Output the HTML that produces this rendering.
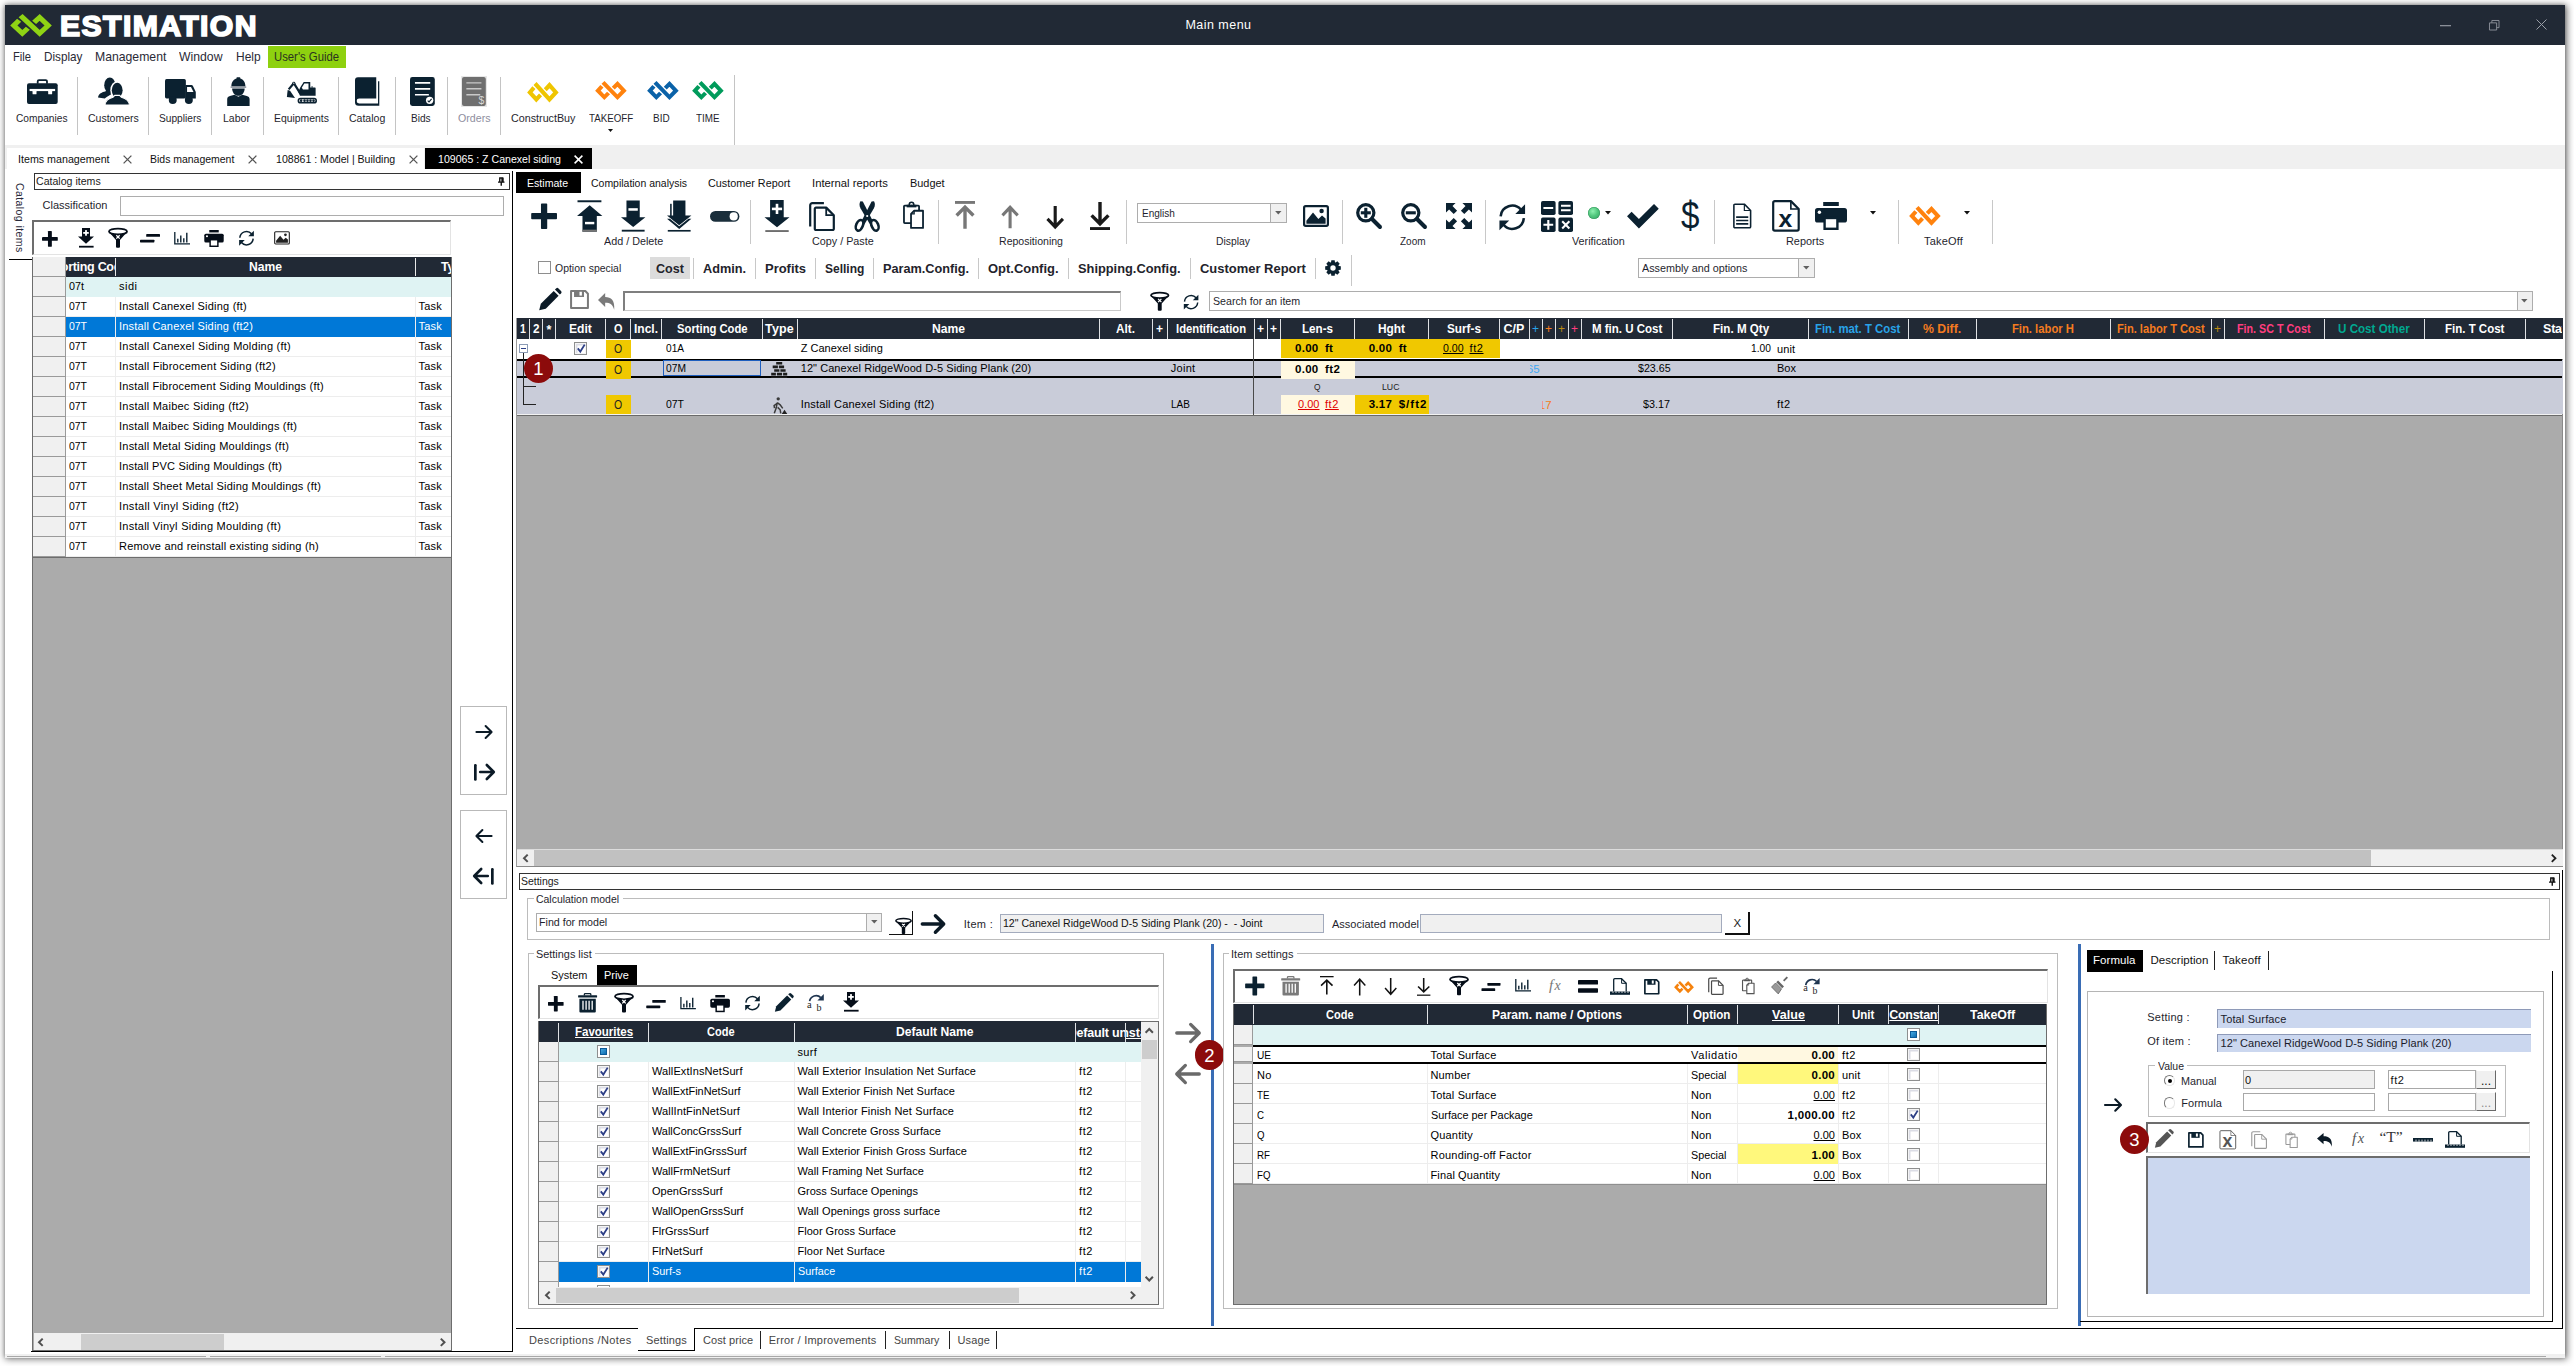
<!DOCTYPE html>
<html><head><meta charset="utf-8"><title>Main menu</title>
<style>
html,body{margin:0;padding:0;}
body{width:2574px;height:1366px;background:#fff;position:relative;overflow:hidden;font-family:"Liberation Sans",sans-serif;font-size:12px;}
div,span.t,svg{position:absolute;box-sizing:border-box;}
span.t{white-space:nowrap;display:block;}
svg{overflow:visible;}
</style></head><body>
<div style="left:5px;top:5px;width:2560px;height:1352px;background:#fff;box-shadow:1px 1px 7px 1px rgba(0,0,0,.55),0 0 3px rgba(0,0,0,.25);"></div>
<div style="left:5px;top:5px;width:2560px;height:39.5px;background:#212935;"></div>
<svg style="left:10.1px;top:14px;" width="42" height="22.6" viewBox="7.1 5.9 31.7 20" preserveAspectRatio="none"><path fill="none" stroke="#8fd314" stroke-width="4.1" stroke-linejoin="miter" d="M14 11.5L10 16.1l6.4 6.9 4.2-4.5M15.1 7.4l14.4 15.6 6.4-6.9-6.4-7.1-4.2 4.4"/></svg>
<span class="t" style="left:60px;top:6.56px;font-size:30.2px;line-height:38px;color:#fff;font-weight:bold;letter-spacing:1.4px;-webkit-text-stroke:1.700px #fff;">ESTIMATION</span>
<span class="t" style="left:1185.5px;top:16.65px;font-size:12.5px;line-height:16px;color:#fff;letter-spacing:0.46px;">Main menu</span>
<svg style="left:2440px;top:24.7px;" width="11" height="2" viewBox="0 0 11 2"><rect width="11" height="1.300" y="0" fill="#8a8f98"/></svg>
<svg style="left:2489px;top:20px;" width="10.5" height="10.5" viewBox="0 0 11 11"><path fill="none" stroke="#8a8f98" stroke-width="1" d="M.5 3h7.500v7.500H.5zM3 3V.5h7.500V8H8"/></svg>
<svg style="left:2536px;top:18.5px;" width="11" height="11" viewBox="0 0 11 11"><path fill="none" stroke="#9a9fa8" stroke-width="1" d="M.5 .5l10 10M10.500 .5l-10 10"/></svg>
<span class="t" style="left:13px;top:48.36px;font-size:13px;line-height:17px;color:#2a2a36;transform:scaleX(0.86);transform-origin:0 50%;">File</span>
<span class="t" style="left:44px;top:48.36px;font-size:13px;line-height:17px;color:#2a2a36;transform:scaleX(0.9);transform-origin:0 50%;">Display</span>
<span class="t" style="left:95px;top:48.36px;font-size:13px;line-height:17px;color:#2a2a36;transform:scaleX(0.94);transform-origin:0 50%;">Management</span>
<span class="t" style="left:179px;top:48.36px;font-size:13px;line-height:17px;color:#2a2a36;transform:scaleX(0.94);transform-origin:0 50%;">Window</span>
<span class="t" style="left:236px;top:48.36px;font-size:13px;line-height:17px;color:#2a2a36;transform:scaleX(0.92);transform-origin:0 50%;">Help</span>
<div style="left:267.5px;top:46px;width:78px;height:21.8px;background:#8ed10f;"></div>
<span class="t" style="left:274px;top:48.36px;font-size:13px;line-height:17px;color:#2a3320;transform:scaleX(0.87);transform-origin:0 50%;">User&#x27;s Guide</span>
<div style="left:77px;top:77px;width:1px;height:57.6px;background:#c4c4c4;"></div>
<div style="left:148px;top:77px;width:1px;height:57.6px;background:#c4c4c4;"></div>
<div style="left:211px;top:77px;width:1px;height:57.6px;background:#c4c4c4;"></div>
<div style="left:263px;top:77px;width:1px;height:57.6px;background:#c4c4c4;"></div>
<div style="left:338px;top:77px;width:1px;height:57.6px;background:#c4c4c4;"></div>
<div style="left:395px;top:77px;width:1px;height:57.6px;background:#c4c4c4;"></div>
<div style="left:447px;top:77px;width:1px;height:57.6px;background:#c4c4c4;"></div>
<div style="left:500px;top:77px;width:1px;height:57.6px;background:#c4c4c4;"></div>
<div style="left:734px;top:75px;width:1px;height:70px;background:#c4c4c4;"></div>
<span class="t" style="left:15.9px;top:110.93px;font-size:11.2px;line-height:15px;color:#1f1f2e;transform:scaleX(0.91);transform-origin:0 50%;">Companies</span>
<span class="t" style="left:87.8px;top:110.93px;font-size:11.2px;line-height:15px;color:#1f1f2e;transform:scaleX(0.94);transform-origin:0 50%;">Customers</span>
<span class="t" style="left:158.5px;top:110.93px;font-size:11.2px;line-height:15px;color:#1f1f2e;transform:scaleX(0.91);transform-origin:0 50%;">Suppliers</span>
<span class="t" style="left:223px;top:110.93px;font-size:11.2px;line-height:15px;color:#1f1f2e;transform:scaleX(0.94);transform-origin:0 50%;">Labor</span>
<span class="t" style="left:273.6px;top:110.93px;font-size:11.2px;line-height:15px;color:#1f1f2e;transform:scaleX(0.93);transform-origin:0 50%;">Equipments</span>
<span class="t" style="left:348.7px;top:110.93px;font-size:11.2px;line-height:15px;color:#1f1f2e;transform:scaleX(0.94);transform-origin:0 50%;">Catalog</span>
<span class="t" style="left:411px;top:110.93px;font-size:11.2px;line-height:15px;color:#1f1f2e;transform:scaleX(0.9);transform-origin:0 50%;">Bids</span>
<span class="t" style="left:457.8px;top:110.93px;font-size:11.2px;line-height:15px;color:#8e8e9e;transform:scaleX(0.95);transform-origin:0 50%;">Orders</span>
<span class="t" style="left:510.7px;top:110.93px;font-size:11.2px;line-height:15px;color:#1f1f2e;transform:scaleX(0.96);transform-origin:0 50%;">ConstructBuy</span>
<span class="t" style="left:589px;top:110.93px;font-size:11.2px;line-height:15px;color:#1f1f2e;transform:scaleX(0.87);transform-origin:0 50%;">TAKEOFF</span>
<span class="t" style="left:653px;top:110.93px;font-size:11.2px;line-height:15px;color:#1f1f2e;transform:scaleX(0.89);transform-origin:0 50%;">BID</span>
<span class="t" style="left:695.5px;top:110.93px;font-size:11.2px;line-height:15px;color:#1f1f2e;transform:scaleX(0.88);transform-origin:0 50%;">TIME</span>
<svg style="left:608px;top:128.9px;" width="5" height="3" viewBox="0 0 8 4.5"><path fill="#111" d="M0 0h8L4 4.5z"/></svg>
<svg style="left:27px;top:78.9px;" width="30.7" height="25.2" viewBox="0 0 31 25"><path fill="none" stroke="#0b2130" stroke-width="1.800" d="M10.800 4.500V2.200a1.300 1.300 0 0 1 1.300-1.300h6.800a1.300 1.300 0 0 1 1.300 1.300v2.300"/><rect x="0" y="4" width="31" height="21" rx="2" fill="#0b2130"/><rect x="2.600" y="9.800" width="25.800" height="2.200" fill="#fff"/><rect x="5.600" y="11.500" width="4" height="3.800" rx=".6" fill="#fff"/><rect x="21.400" y="11.500" width="4" height="3.800" rx=".6" fill="#fff"/></svg>
<svg style="left:98px;top:77px;" width="31" height="28" viewBox="0 0 31 28"><ellipse cx="11.800" cy="8.200" rx="5.600" ry="7.600" fill="#0b2130"/><path fill="#0b2130" d="M0 20.500c.6-4 4-5.300 7.600-6.300l3-1.400h4.600l.5 3-7 4.200-2 1.500z"/><ellipse cx="19.200" cy="13.200" rx="6.900" ry="9" fill="#fff"/><ellipse cx="19.200" cy="13.200" rx="5.400" ry="7.500" fill="#0b2130"/><path fill="#0b2130" stroke="#fff" stroke-width="1.100" d="M7 28c.4-5 3.600-6.600 8-7.800l1.800-1.800h4.800l1.800 1.800c4.400 1.200 7.600 2.800 8 7.800z"/></svg>
<svg style="left:164.6px;top:78.9px;" width="30.8" height="25" viewBox="0 0 31 25"><rect x="0" y="0" width="21" height="19.500" rx="1.600" fill="#0b2130"/><path fill="#0b2130" d="M20.500 6h6.200a1.500 1.500 0 0 1 1.300.8l2.800 5.600a2 2 0 0 1 .2.900v6.200h-10.500z"/><path fill="#fff" d="M22.200 8h4l2.500 5h-6.500z"/><circle cx="7.800" cy="21" r="4" fill="#0b2130"/><circle cx="24" cy="21" r="4" fill="#0b2130"/></svg>
<svg style="left:226.7px;top:76.6px;" width="22.8" height="29.3" viewBox="0 0 23 29"><path fill="#0b2130" d="M4.400 9.400C4.400 4 7.600 1.800 9.600 1.300V.6a.6.600 0 0 1 .6-.6h2.600a.6.600 0 0 1 .6.600v.7c2 .5 5.200 2.700 5.200 8.100z"/><rect x="3.600" y="9.200" width="15.800" height="1.500" fill="#8a929b"/><path fill="#0b2130" d="M5.200 11.200h12.600c0 4-2.600 7.400-6.300 7.400s-6.300-3.400-6.300-7.400z"/><path fill="#0b2130" d="M.2 29v-6.800c0-1.800 1.200-2.700 2.800-3.200l4.600-1.400 3.900 2 3.900-2 4.600 1.400c1.600.5 2.800 1.400 2.800 3.200V29z"/></svg>
<svg style="left:285.8px;top:80.6px;" width="31.3" height="22.8" viewBox="0 0 31 23"><path fill="#0b2130" d="M14.200 6.400L17.600 .9h6.600v5.700h1.400V5h.8v1.600H29a.6.600 0 0 1 .6.600v7.600H13.800l-1.700-4z"/><path fill="#fff" d="M15.600 6.800l2.600-4.300h4.200v6.100h-5.600z"/><path fill="none" stroke="#0b2130" stroke-width="2.200" stroke-linejoin="round" d="M2.400 8.400L7.600 2.200l6.600 10.600"/><path fill="#0b2130" d="M1.400 9.200l2.400.6 5 7.400-8.200-1z"/><circle cx="7.600" cy="2.200" r="1.500" fill="#0b2130"/><circle cx="7.600" cy="2.200" r=".6" fill="#fff"/><rect x="11.400" y="16.800" width="19.600" height="6" rx="3" fill="#0b2130"/><rect x="13" y="18.400" width="16.400" height="2.800" rx="1.400" fill="#fff"/><circle cx="15" cy="19.800" r="1.300" fill="#0b2130"/><circle cx="18.400" cy="19.800" r="1.300" fill="#0b2130"/><circle cx="21.400" cy="19.800" r="1.300" fill="#0b2130"/><circle cx="24.400" cy="19.800" r="1.300" fill="#0b2130"/><circle cx="27.500" cy="19.800" r="1.300" fill="#0b2130"/></svg>
<svg style="left:354.7px;top:76.9px;" width="24.6" height="29" viewBox="0 0 25 29"><path fill="#0b2130" d="M3 0h18.600v21.600H4.200a2 2 0 0 0 0 5h19.200V4.200h1.300V29H3.600A3.600 3.600 0 0 1 0 25.400V3a3 3 0 0 1 3-3z"/><path fill="#0b2130" d="M4.200 22.800h17.400v2.400H4.200a1.200 1.200 0 0 1 0-2.400z" opacity="0"/></svg>
<svg style="left:410px;top:76.9px;" width="24.8" height="29" viewBox="0 0 25 29"><rect x="0" y="0" width="25" height="29" rx="2.400" fill="#0b2130"/><path stroke="#fff" stroke-width="1.700" d="M5 5.800h15.400M5 11.800h15.400M5 17.800h14"/><circle cx="19.800" cy="23.400" r="3.700" fill="#fff"/><path fill="none" stroke="#0b2130" stroke-width="1.100" d="M17.800 23.600l1.400 1.400 2.600-3"/></svg>
<div style="left:461px;top:75.5px;width:26.4px;height:31.5px;background:#e6e6e6;"></div>
<svg style="left:462.4px;top:76.9px;" width="23.8" height="29" viewBox="0 0 24 29"><rect x="0" y="0" width="24" height="29" rx="2" fill="#6f6f6f"/><path stroke="#c9c9c9" stroke-width="1.500" d="M4.400 5.800h15.200M4.400 11.800h15.200M4.400 17.800h14"/><text x="22.600" y="27.600" text-anchor="end" font-family="Liberation Sans,sans-serif" font-size="10.500" fill="#d8d8d8">$</text></svg>
<svg style="left:527px;top:81.6px;" width="31.8" height="20.5" viewBox="7.1 5.9 31.7 20" preserveAspectRatio="none"><path fill="none" stroke="#efc500" stroke-width="4.1" stroke-linejoin="miter" d="M14 11.5L10 16.1l6.4 6.9 4.2-4.5M15.1 7.4l14.4 15.6 6.4-6.9-6.4-7.1-4.2 4.4"/></svg>
<svg style="left:595px;top:81.4px;" width="31.8" height="19" viewBox="7.1 5.9 31.7 20" preserveAspectRatio="none"><path fill="none" stroke="#ff820d" stroke-width="4.1" stroke-linejoin="miter" d="M14 11.5L10 16.1l6.4 6.9 4.2-4.5M15.1 7.4l14.4 15.6 6.4-6.9-6.4-7.1-4.2 4.4"/></svg>
<svg style="left:647px;top:81.4px;" width="31.8" height="19" viewBox="7.1 5.9 31.7 20" preserveAspectRatio="none"><path fill="none" stroke="#0a62a8" stroke-width="4.1" stroke-linejoin="miter" d="M14 11.5L10 16.1l6.4 6.9 4.2-4.5M15.1 7.4l14.4 15.6 6.4-6.9-6.4-7.1-4.2 4.4"/></svg>
<svg style="left:692px;top:81.4px;" width="31.8" height="19" viewBox="7.1 5.9 31.7 20" preserveAspectRatio="none"><path fill="none" stroke="#009b5b" stroke-width="4.1" stroke-linejoin="miter" d="M14 11.5L10 16.1l6.4 6.9 4.2-4.5M15.1 7.4l14.4 15.6 6.4-6.9-6.4-7.1-4.2 4.4"/></svg>
<div style="left:5px;top:144.5px;width:2560px;height:24.3px;background:#f0f0f0;"></div>
<div style="left:7px;top:147.5px;width:417px;height:21.3px;background:#fff;"></div>
<span class="t" style="left:17.5px;top:151.74px;font-size:11.5px;line-height:15px;color:#111;transform:scaleX(0.93);transform-origin:0 50%;">Items management</span>
<svg style="left:122.5px;top:154.7px;" width="9" height="9" viewBox="0 0 9 9"><path stroke="#555" stroke-width="1.300" d="M.6 .6l7.800 7.800M8.400 .6L.6 8.400"/></svg>
<span class="t" style="left:150px;top:151.74px;font-size:11.5px;line-height:15px;color:#111;transform:scaleX(0.91);transform-origin:0 50%;">Bids management</span>
<svg style="left:247.5px;top:154.7px;" width="9" height="9" viewBox="0 0 9 9"><path stroke="#555" stroke-width="1.300" d="M.6 .6l7.800 7.800M8.400 .6L.6 8.400"/></svg>
<span class="t" style="left:276px;top:151.74px;font-size:11.5px;line-height:15px;color:#111;transform:scaleX(0.92);transform-origin:0 50%;">108861 : Model | Building</span>
<svg style="left:408.5px;top:154.7px;" width="9" height="9" viewBox="0 0 9 9"><path stroke="#555" stroke-width="1.300" d="M.6 .6l7.800 7.800M8.400 .6L.6 8.400"/></svg>
<div style="left:425px;top:147.5px;width:167.3px;height:21.4px;background:#000;"></div>
<span class="t" style="left:437.6px;top:152.44px;font-size:11.5px;line-height:15px;color:#fff;transform:scaleX(0.92);transform-origin:0 50%;">109065 : Z Canexel siding</span>
<svg style="left:574px;top:155.1px;" width="9" height="9" viewBox="0 0 9 9"><path stroke="#fff" stroke-width="1.500" d="M.6 .6l7.800 7.800M8.400 .6L.6 8.400"/></svg>
<span class="t" style="left:26.300px;top:182.500px;font-size:10.500px;line-height:12px;color:#2a2a3a;transform:rotate(90deg);transform-origin:0 0;letter-spacing:0.42px;">Catalog items</span>
<div style="left:9px;top:259px;width:23.5px;height:1px;background:#000;"></div>
<div style="left:512px;top:171px;width:1px;height:1181px;background:#000;"></div>
<div style="left:31px;top:1351px;width:481px;height:1px;background:#000;"></div>
<div style="left:34px;top:173px;width:475.5px;height:16.6px;background:#fff;border:1px solid #333;"></div>
<span class="t" style="left:36px;top:174.04px;font-size:11.5px;line-height:15px;color:#222;transform:scaleX(0.92);transform-origin:0 50%;">Catalog items</span>
<svg style="left:497.5px;top:176.5px;" width="6.5" height="9" viewBox="0 0 7 9"><path fill="none" stroke="#111" stroke-width="1.500" d="M1.200 .8h4.600M1.900 .6v4.400M5.200 .6v4.400M0 5.200h7M3.500 5.200V9"/><rect x="3.600" y=".6" width="2.200" height="4.600" fill="#111"/></svg>
<span class="t" style="left:42.5px;top:198.43px;font-size:11px;line-height:14px;color:#1f1f2e;letter-spacing:0.01px;">Classification</span>
<div style="left:120px;top:196px;width:383.5px;height:20px;background:#fff;border:1px solid #adadad;"></div>
<div style="left:32px;top:220px;width:418.5px;height:34.5px;background:#fff;border-top:2px solid #6d6d6d;border-left:2px solid #6d6d6d;border-right:1px solid #e3e3e3;border-bottom:1px solid #e3e3e3;"></div>
<svg style="left:42px;top:230.5px;" width="15.8" height="15.8" viewBox="0 0 26 26"><rect x="9.8" y="0" width="6.4" height="26" rx=".8" fill="#050d18"/><rect x="0" y="9.8" width="26" height="6.4" rx=".8" fill="#050d18"/></svg>
<svg style="left:78px;top:228px;" width="16" height="20" viewBox="0 0 16 20"><path fill="#050d18" d="M4 0h8v8.4h4L8 15.8 0 8.4h4z"/><rect x="5.2" y="4" width="5.6" height="1.8" fill="#fff"/><rect x="7.1" y="2.1" width="1.8" height="5.6" fill="#fff"/><rect x="1" y="17.8" width="14.6" height="1.8" fill="#050d18"/></svg>
<svg style="left:108px;top:228px;" width="20" height="20" viewBox="0 0 20 20" preserveAspectRatio="none"><path fill="#050d18" d="M.6 3.600L8 12v6.800a1 1 0 0 0 1 1h2a1 1 0 0 0 1-1V12l7.400-8.400z"/><ellipse cx="10" cy="3.500" rx="9" ry="2.900" fill="#fff" stroke="#050d18" stroke-width="1.800"/><path stroke="#fff" stroke-width="1.300" d="M8.300 7.200l3.400 3.400M11.700 7.200l-3.400 3.400"/></svg>
<svg style="left:140px;top:234px;" width="20" height="8.7" viewBox="0 0 20 8.6"><rect x="6.200" y="0" width="13.800" height="2.800" rx=".6" fill="#050d18"/><rect x="0" y="5.600" width="14.400" height="2.800" rx=".6" fill="#050d18"/></svg>
<svg style="left:174px;top:231.5px;" width="16" height="13" viewBox="0 0 16 13"><path fill="none" stroke="#0b2130" stroke-width="1.3" d="M.8 0v11.900H16"/><path stroke="#0b2130" stroke-width="1.4" d="M3.800 10.600V6.800M6.800 10.600V3.600M9.800 10.600V6.200M12.800 10.600V.8"/></svg>
<svg style="left:204px;top:229.5px;" width="20" height="17" viewBox="0 0 32 28"><rect x="8.2" y="0" width="15.6" height="4" fill="#050d18"/><rect x="0" y="6" width="32" height="14.6" rx="2.6" fill="#050d18"/><circle cx="4.4" cy="10.2" r="1.7" fill="#fff"/><rect x="9.6" y="16" width="12.8" height="10.8" fill="#fff" stroke="#050d18" stroke-width="2.4"/></svg>
<svg style="left:237.5px;top:229.8px;" width="17" height="16.4" viewBox="0 0 26 28"><path fill="none" stroke="#0b2130" stroke-width="2.6" d="M1.6 13.2A11.4 11.4 0 0 1 21.6 6.6"/><path fill="#0b2130" d="M25.6 1.2v9.6H16z"/><path fill="none" stroke="#0b2130" stroke-width="2.6" d="M24.4 14.8A11.4 11.4 0 0 1 4.4 21.4"/><path fill="#0b2130" d="M.4 26.8v-9.6H10z"/></svg>
<svg style="left:274px;top:231px;" width="16" height="13.8" viewBox="0 0 26 22"><rect x="1.1" y="1.1" width="23.8" height="19.8" rx="1.6" fill="#fff" stroke="#222" stroke-width="1.8"/><path fill="#222" d="M3.4 18.800v-3L10 7.600l5.400 6.400 3.600-3.400 3.600 3v5.200z"/><circle cx="18.6" cy="6" r="2.2" fill="#222"/></svg>
<div style="left:32px;top:256.6px;width:420px;height:1094.4px;background:#ababab;border:1px solid #6d6d6d;"></div>
<div style="left:33px;top:257px;width:418px;height:19.7px;background:#212935;"></div>
<div style="left:33px;top:257px;width:33px;height:19.7px;background:#f0f0f0;border-right:1px solid #9a9a9a;border-bottom:1px solid #9a9a9a;"></div>
<div style="left:115px;top:257.5px;width:1px;height:18.5px;background:#e8e8e8;"></div>
<div style="left:415px;top:257.5px;width:1px;height:18.5px;background:#e8e8e8;"></div>
<div style="left:66px;top:257px;width:49px;height:19.5px;overflow:hidden;"><span class="t" style="left:-13.200px;top:2px;font-size:12.500px;line-height:16px;font-weight:bold;color:#fff;letter-spacing:-.3px;">Sorting Code</span></div>
<span class="t" style="left:249px;top:259.15px;font-size:12.5px;line-height:16px;color:#fff;font-weight:bold;transform:scaleX(0.97);transform-origin:0 50%;">Name</span>
<div style="left:416px;top:257px;width:35px;height:19.5px;overflow:hidden;"><span class="t" style="left:25px;top:2px;font-size:12.500px;line-height:16px;font-weight:bold;color:#fff;letter-spacing:-.3px;">Type</span></div>
<div style="left:66px;top:276.7px;width:385px;height:20px;background:#dff3f3;"></div>
<div style="left:33px;top:276.7px;width:33px;height:20px;background:#f0f0f0;border-right:1px solid #9a9a9a;border-bottom:1px solid #9a9a9a;"></div>
<span class="t" style="left:69.3px;top:279.03px;font-size:11px;line-height:14px;color:#000;transform:scaleX(0.98);transform-origin:0 50%;">07t</span>
<span class="t" style="left:119px;top:279.03px;font-size:11px;line-height:14px;color:#000;letter-spacing:0.5px;">sidi</span>
<div style="left:66px;top:296.7px;width:385px;height:20px;background:#fff;"></div>
<div style="left:33px;top:296.7px;width:33px;height:20px;background:#f0f0f0;border-right:1px solid #9a9a9a;border-bottom:1px solid #9a9a9a;"></div>
<div style="left:65.5px;top:316px;width:385.5px;height:1px;background:#ededed;"></div>
<div style="left:115px;top:296.7px;width:1px;height:20px;background:#ededed;"></div>
<div style="left:415px;top:296.7px;width:1px;height:20px;background:#ededed;"></div>
<span class="t" style="left:69.3px;top:299.03px;font-size:11px;line-height:14px;color:#000;transform:scaleX(0.95);transform-origin:0 50%;">07T</span>
<span class="t" style="left:119px;top:299.03px;font-size:11px;line-height:14px;color:#000;letter-spacing:0.21px;">Install Canexel Siding (ft)</span>
<span class="t" style="left:418.5px;top:299.03px;font-size:11px;line-height:14px;color:#000;letter-spacing:0.22px;">Task</span>
<div style="left:66px;top:316.7px;width:385px;height:20px;background:#0078d7;"></div>
<div style="left:33px;top:316.7px;width:33px;height:20px;background:#f0f0f0;border-right:1px solid #9a9a9a;border-bottom:1px solid #9a9a9a;"></div>
<div style="left:65.5px;top:336px;width:385.5px;height:1px;background:#0078d7;"></div>
<div style="left:115px;top:316.7px;width:1px;height:20px;background:#ededed;"></div>
<div style="left:415px;top:316.7px;width:1px;height:20px;background:#ededed;"></div>
<span class="t" style="left:69.3px;top:319.03px;font-size:11px;line-height:14px;color:#fff;transform:scaleX(0.95);transform-origin:0 50%;">07T</span>
<span class="t" style="left:119px;top:319.03px;font-size:11px;line-height:14px;color:#fff;letter-spacing:0.2px;">Install Canexel Siding (ft2)</span>
<span class="t" style="left:418.5px;top:319.03px;font-size:11px;line-height:14px;color:#fff;letter-spacing:0.22px;">Task</span>
<div style="left:66px;top:336.7px;width:385px;height:20px;background:#fff;"></div>
<div style="left:33px;top:336.7px;width:33px;height:20px;background:#f0f0f0;border-right:1px solid #9a9a9a;border-bottom:1px solid #9a9a9a;"></div>
<div style="left:65.5px;top:356px;width:385.5px;height:1px;background:#ededed;"></div>
<div style="left:115px;top:336.7px;width:1px;height:20px;background:#ededed;"></div>
<div style="left:415px;top:336.7px;width:1px;height:20px;background:#ededed;"></div>
<span class="t" style="left:69.3px;top:339.03px;font-size:11px;line-height:14px;color:#000;transform:scaleX(0.95);transform-origin:0 50%;">07T</span>
<span class="t" style="left:119px;top:339.03px;font-size:11px;line-height:14px;color:#000;letter-spacing:0.23px;">Install Canexel Siding Molding (ft)</span>
<span class="t" style="left:418.5px;top:339.03px;font-size:11px;line-height:14px;color:#000;letter-spacing:0.22px;">Task</span>
<div style="left:66px;top:356.7px;width:385px;height:20px;background:#fff;"></div>
<div style="left:33px;top:356.7px;width:33px;height:20px;background:#f0f0f0;border-right:1px solid #9a9a9a;border-bottom:1px solid #9a9a9a;"></div>
<div style="left:65.5px;top:376px;width:385.5px;height:1px;background:#ededed;"></div>
<div style="left:115px;top:356.7px;width:1px;height:20px;background:#ededed;"></div>
<div style="left:415px;top:356.7px;width:1px;height:20px;background:#ededed;"></div>
<span class="t" style="left:69.3px;top:359.03px;font-size:11px;line-height:14px;color:#000;transform:scaleX(0.95);transform-origin:0 50%;">07T</span>
<span class="t" style="left:119px;top:359.03px;font-size:11px;line-height:14px;color:#000;letter-spacing:0.24px;">Install Fibrocement Siding (ft2)</span>
<span class="t" style="left:418.5px;top:359.03px;font-size:11px;line-height:14px;color:#000;letter-spacing:0.22px;">Task</span>
<div style="left:66px;top:376.7px;width:385px;height:20px;background:#fff;"></div>
<div style="left:33px;top:376.7px;width:33px;height:20px;background:#f0f0f0;border-right:1px solid #9a9a9a;border-bottom:1px solid #9a9a9a;"></div>
<div style="left:65.5px;top:396px;width:385.5px;height:1px;background:#ededed;"></div>
<div style="left:115px;top:376.7px;width:1px;height:20px;background:#ededed;"></div>
<div style="left:415px;top:376.7px;width:1px;height:20px;background:#ededed;"></div>
<span class="t" style="left:69.3px;top:379.03px;font-size:11px;line-height:14px;color:#000;transform:scaleX(0.95);transform-origin:0 50%;">07T</span>
<span class="t" style="left:119px;top:379.03px;font-size:11px;line-height:14px;color:#000;letter-spacing:0.21px;">Install Fibrocement Siding Mouldings (ft)</span>
<span class="t" style="left:418.5px;top:379.03px;font-size:11px;line-height:14px;color:#000;letter-spacing:0.22px;">Task</span>
<div style="left:66px;top:396.7px;width:385px;height:20px;background:#fff;"></div>
<div style="left:33px;top:396.7px;width:33px;height:20px;background:#f0f0f0;border-right:1px solid #9a9a9a;border-bottom:1px solid #9a9a9a;"></div>
<div style="left:65.5px;top:416px;width:385.5px;height:1px;background:#ededed;"></div>
<div style="left:115px;top:396.7px;width:1px;height:20px;background:#ededed;"></div>
<div style="left:415px;top:396.7px;width:1px;height:20px;background:#ededed;"></div>
<span class="t" style="left:69.3px;top:399.03px;font-size:11px;line-height:14px;color:#000;transform:scaleX(0.95);transform-origin:0 50%;">07T</span>
<span class="t" style="left:119px;top:399.03px;font-size:11px;line-height:14px;color:#000;letter-spacing:0.24px;">Install Maibec Siding (ft2)</span>
<span class="t" style="left:418.5px;top:399.03px;font-size:11px;line-height:14px;color:#000;letter-spacing:0.22px;">Task</span>
<div style="left:66px;top:416.7px;width:385px;height:20px;background:#fff;"></div>
<div style="left:33px;top:416.7px;width:33px;height:20px;background:#f0f0f0;border-right:1px solid #9a9a9a;border-bottom:1px solid #9a9a9a;"></div>
<div style="left:65.5px;top:436px;width:385.5px;height:1px;background:#ededed;"></div>
<div style="left:115px;top:416.7px;width:1px;height:20px;background:#ededed;"></div>
<div style="left:415px;top:416.7px;width:1px;height:20px;background:#ededed;"></div>
<span class="t" style="left:69.3px;top:419.03px;font-size:11px;line-height:14px;color:#000;transform:scaleX(0.95);transform-origin:0 50%;">07T</span>
<span class="t" style="left:119px;top:419.03px;font-size:11px;line-height:14px;color:#000;letter-spacing:0.21px;">Install Maibec Siding Mouldings (ft)</span>
<span class="t" style="left:418.5px;top:419.03px;font-size:11px;line-height:14px;color:#000;letter-spacing:0.22px;">Task</span>
<div style="left:66px;top:436.7px;width:385px;height:20px;background:#fff;"></div>
<div style="left:33px;top:436.7px;width:33px;height:20px;background:#f0f0f0;border-right:1px solid #9a9a9a;border-bottom:1px solid #9a9a9a;"></div>
<div style="left:65.5px;top:456px;width:385.5px;height:1px;background:#ededed;"></div>
<div style="left:115px;top:436.7px;width:1px;height:20px;background:#ededed;"></div>
<div style="left:415px;top:436.7px;width:1px;height:20px;background:#ededed;"></div>
<span class="t" style="left:69.3px;top:439.03px;font-size:11px;line-height:14px;color:#000;transform:scaleX(0.95);transform-origin:0 50%;">07T</span>
<span class="t" style="left:119px;top:439.03px;font-size:11px;line-height:14px;color:#000;letter-spacing:0.23px;">Install Metal Siding Mouldings (ft)</span>
<span class="t" style="left:418.5px;top:439.03px;font-size:11px;line-height:14px;color:#000;letter-spacing:0.22px;">Task</span>
<div style="left:66px;top:456.7px;width:385px;height:20px;background:#fff;"></div>
<div style="left:33px;top:456.7px;width:33px;height:20px;background:#f0f0f0;border-right:1px solid #9a9a9a;border-bottom:1px solid #9a9a9a;"></div>
<div style="left:65.5px;top:476px;width:385.5px;height:1px;background:#ededed;"></div>
<div style="left:115px;top:456.7px;width:1px;height:20px;background:#ededed;"></div>
<div style="left:415px;top:456.7px;width:1px;height:20px;background:#ededed;"></div>
<span class="t" style="left:69.3px;top:459.03px;font-size:11px;line-height:14px;color:#000;transform:scaleX(0.95);transform-origin:0 50%;">07T</span>
<span class="t" style="left:119px;top:459.03px;font-size:11px;line-height:14px;color:#000;letter-spacing:0.16px;">Install PVC Siding Mouldings (ft)</span>
<span class="t" style="left:418.5px;top:459.03px;font-size:11px;line-height:14px;color:#000;letter-spacing:0.22px;">Task</span>
<div style="left:66px;top:476.7px;width:385px;height:20px;background:#fff;"></div>
<div style="left:33px;top:476.7px;width:33px;height:20px;background:#f0f0f0;border-right:1px solid #9a9a9a;border-bottom:1px solid #9a9a9a;"></div>
<div style="left:65.5px;top:496px;width:385.5px;height:1px;background:#ededed;"></div>
<div style="left:115px;top:476.7px;width:1px;height:20px;background:#ededed;"></div>
<div style="left:415px;top:476.7px;width:1px;height:20px;background:#ededed;"></div>
<span class="t" style="left:69.3px;top:479.03px;font-size:11px;line-height:14px;color:#000;transform:scaleX(0.95);transform-origin:0 50%;">07T</span>
<span class="t" style="left:119px;top:479.03px;font-size:11px;line-height:14px;color:#000;letter-spacing:0.2px;">Install Sheet Metal Siding Mouldings (ft)</span>
<span class="t" style="left:418.5px;top:479.03px;font-size:11px;line-height:14px;color:#000;letter-spacing:0.22px;">Task</span>
<div style="left:66px;top:496.7px;width:385px;height:20px;background:#fff;"></div>
<div style="left:33px;top:496.7px;width:33px;height:20px;background:#f0f0f0;border-right:1px solid #9a9a9a;border-bottom:1px solid #9a9a9a;"></div>
<div style="left:65.5px;top:516px;width:385.5px;height:1px;background:#ededed;"></div>
<div style="left:115px;top:496.7px;width:1px;height:20px;background:#ededed;"></div>
<div style="left:415px;top:496.7px;width:1px;height:20px;background:#ededed;"></div>
<span class="t" style="left:69.3px;top:499.03px;font-size:11px;line-height:14px;color:#000;transform:scaleX(0.95);transform-origin:0 50%;">07T</span>
<span class="t" style="left:119px;top:499.03px;font-size:11px;line-height:14px;color:#000;letter-spacing:0.32px;">Install Vinyl Siding (ft2)</span>
<span class="t" style="left:418.5px;top:499.03px;font-size:11px;line-height:14px;color:#000;letter-spacing:0.22px;">Task</span>
<div style="left:66px;top:516.7px;width:385px;height:20px;background:#fff;"></div>
<div style="left:33px;top:516.7px;width:33px;height:20px;background:#f0f0f0;border-right:1px solid #9a9a9a;border-bottom:1px solid #9a9a9a;"></div>
<div style="left:65.5px;top:536px;width:385.5px;height:1px;background:#ededed;"></div>
<div style="left:115px;top:516.7px;width:1px;height:20px;background:#ededed;"></div>
<div style="left:415px;top:516.7px;width:1px;height:20px;background:#ededed;"></div>
<span class="t" style="left:69.3px;top:519.03px;font-size:11px;line-height:14px;color:#000;transform:scaleX(0.95);transform-origin:0 50%;">07T</span>
<span class="t" style="left:119px;top:519.03px;font-size:11px;line-height:14px;color:#000;letter-spacing:0.26px;">Install Vinyl Siding Moulding (ft)</span>
<span class="t" style="left:418.5px;top:519.03px;font-size:11px;line-height:14px;color:#000;letter-spacing:0.22px;">Task</span>
<div style="left:66px;top:536.7px;width:385px;height:20px;background:#fff;"></div>
<div style="left:33px;top:536.7px;width:33px;height:20px;background:#f0f0f0;border-right:1px solid #9a9a9a;border-bottom:1px solid #9a9a9a;"></div>
<div style="left:65.5px;top:556px;width:385.5px;height:1px;background:#ededed;"></div>
<div style="left:115px;top:536.7px;width:1px;height:20px;background:#ededed;"></div>
<div style="left:415px;top:536.7px;width:1px;height:20px;background:#ededed;"></div>
<span class="t" style="left:69.3px;top:539.03px;font-size:11px;line-height:14px;color:#000;transform:scaleX(0.95);transform-origin:0 50%;">07T</span>
<span class="t" style="left:119px;top:539.03px;font-size:11px;line-height:14px;color:#000;letter-spacing:0.2px;">Remove and reinstall existing siding (h)</span>
<span class="t" style="left:418.5px;top:539.03px;font-size:11px;line-height:14px;color:#000;letter-spacing:0.22px;">Task</span>
<div style="left:33px;top:557px;width:419px;height:1px;background:#6d6d6d;"></div>
<div style="left:33.5px;top:1333.3px;width:417px;height:17px;background:#f0f0f0;"></div>
<div style="left:80.5px;top:1334px;width:143px;height:16px;background:#cdcdcd;"></div>
<svg style="left:38px;top:1338px;" width="5.5" height="8.5" viewBox="0 0 5.500 8.500"><path fill="none" stroke="#505050" stroke-width="2" d="M4.700 .6L1 4.250l3.700 3.650"/></svg>
<svg style="left:439.5px;top:1338px;" width="5.5" height="8.5" viewBox="0 0 5.500 8.500"><path fill="none" stroke="#505050" stroke-width="2" d="M.8 .6L4.500 4.250.8 7.900"/></svg>
<div style="left:459.5px;top:706px;width:47px;height:88.5px;background:#fff;border:1px solid #b9b9b9;"></div>
<div style="left:459.5px;top:810px;width:47px;height:88.5px;background:#fff;border:1px solid #b9b9b9;"></div>
<svg style="left:484.3px;top:732.3px;" width="1" height="1" viewBox="0 0 1 1"><path fill="none" stroke="#0b1a26" stroke-width="2" stroke-linecap="round" stroke-linejoin="round" d="M-7.6 0H6.8M1.6 -6L7.6 0L1.6 6"/></svg>
<svg style="left:486.8px;top:772.2px;" width="1" height="1" viewBox="0 0 1 1"><path fill="none" stroke="#0b1a26" stroke-width="2.6" stroke-linecap="round" stroke-linejoin="round" d="M-6.8 0H6M-0.2 -7L6.8 0L-0.2 7"/></svg>
<svg style="left:474px;top:763.6px;" width="2.7" height="16.8" viewBox="0 0 2.700 16.800"><rect width="2.700" height="16.800" rx="1.200" fill="#0b1a26"/></svg>
<svg style="left:484.3px;top:836.3px;" width="1" height="1" viewBox="0 0 1 1"><path fill="none" stroke="#0b1a26" stroke-width="2" stroke-linecap="round" stroke-linejoin="round" d="M7.6 0H-6.8M-1.6 -6L-7.6 0L-1.6 6"/></svg>
<svg style="left:481.3px;top:876.3px;" width="1" height="1" viewBox="0 0 1 1"><path fill="none" stroke="#0b1a26" stroke-width="2.6" stroke-linecap="round" stroke-linejoin="round" d="M6.8 0H-6M0.2 -7L-6.8 0L0.2 7"/></svg>
<svg style="left:491.3px;top:867.8px;" width="2.7" height="16.8" viewBox="0 0 2.700 16.800"><rect width="2.700" height="16.800" rx="1.200" fill="#0b1a26"/></svg>
<div style="left:515.5px;top:172px;width:65.5px;height:20.5px;background:#000;"></div>
<span class="t" style="left:527px;top:175.64px;font-size:11.5px;line-height:15px;color:#fff;transform:scaleX(0.92);transform-origin:0 50%;">Estimate</span>
<span class="t" style="left:590.5px;top:175.64px;font-size:11.5px;line-height:15px;color:#111;transform:scaleX(0.91);transform-origin:0 50%;">Compilation analysis</span>
<span class="t" style="left:708px;top:175.64px;font-size:11.5px;line-height:15px;color:#111;transform:scaleX(0.94);transform-origin:0 50%;">Customer Report</span>
<span class="t" style="left:812px;top:175.64px;font-size:11.5px;line-height:15px;color:#111;transform:scaleX(0.98);transform-origin:0 50%;">Internal reports</span>
<span class="t" style="left:909.5px;top:175.64px;font-size:11.5px;line-height:15px;color:#111;transform:scaleX(0.95);transform-origin:0 50%;">Budget</span>
<div style="left:750px;top:200px;width:1px;height:43.8px;background:#c8c8c8;"></div>
<div style="left:938px;top:200px;width:1px;height:43.8px;background:#c8c8c8;"></div>
<div style="left:1126px;top:200px;width:1px;height:43.8px;background:#c8c8c8;"></div>
<div style="left:1342px;top:200px;width:1px;height:43.8px;background:#c8c8c8;"></div>
<div style="left:1485px;top:200px;width:1px;height:43.8px;background:#c8c8c8;"></div>
<div style="left:1714px;top:200px;width:1px;height:43.8px;background:#c8c8c8;"></div>
<div style="left:1898px;top:200px;width:1px;height:43.8px;background:#c8c8c8;"></div>
<div style="left:1992px;top:200px;width:1px;height:43.8px;background:#c8c8c8;"></div>
<svg style="left:530.8px;top:203px;" width="26.2" height="26.2" viewBox="0 0 26 26"><path fill="#0b2130" d="M10.7 0.5h4.6a.8.8 0 0 1 .8.8V9.9H25a.8.8 0 0 1 .8.8v4.6a.8.8 0 0 1-.8.8H16.1V25a.8.8 0 0 1-.8.8h-4.6a.8.8 0 0 1-.8-.8V16.1H1a.8.8 0 0 1-.8-.8v-4.6A.8.8 0 0 1 1 9.9H9.9V1.3a.8.8 0 0 1 .8-.8z"/></svg>
<svg style="left:576.8px;top:199.6px;" width="25.4" height="32.2" viewBox="0 0 26 33"><rect x=".5" y=".3" width="24.5" height="2" fill="#0b2130"/><path fill="#0b2130" d="M13 5.3L26 16.3h-5.7v16.2H5.6V16.3H0z"/><rect x="8.2" y="22.4" width="9.5" height="2.5" fill="#fff"/><rect x="5.6" y="30.4" width="14.7" height="2.2" fill="#777"/></svg>
<svg style="left:621.4px;top:199.7px;" width="24.4" height="32" viewBox="0 0 25 32"><path fill="#0b2130" d="M5.6 0h13.6v17.3H25L12.5 27.2 0 17.3h5.6z"/><rect x="7.6" y="8" width="9.6" height="2.6" fill="#fff"/><rect x=".8" y="30.1" width="23.4" height="1.9" fill="#0b2130"/></svg>
<svg style="left:666.8px;top:199.7px;" width="24.4" height="32" viewBox="0 0 25 32"><rect x="3.2" y="3.5" width="1.6" height="13" fill="#0b2130"/><path fill="#0b2130" d="M0 18.8h3L12.5 26.5 22 18.8h3L12.5 29.3z"/><path fill="#0b2130" stroke="#fff" stroke-width="0" d="M6.3 0h12.6v15.6H25L12.5 25.6 0 15.6h6.3z"/><rect x=".8" y="30.3" width="23.4" height="1.7" fill="#0b2130"/></svg>
<svg style="left:709.6px;top:211.2px;" width="29.4" height="10.8" viewBox="0 0 29.4 10.8"><rect x="0" y="0" width="29.4" height="10.8" rx="5.4" fill="#1a2e3b"/><circle cx="23.7" cy="5.4" r="4.1" fill="#fff"/></svg>
<svg style="left:764px;top:199.7px;" width="26" height="32" viewBox="0 0 25 32"><path fill="#0b2130" d="M5.6 0h13.6v17.3H25L12.5 27.2 0 17.3h5.6z"/><rect x="7.4" y="7.6" width="10.2" height="2.6" fill="#fff"/><rect x="11.2" y="3.8" width="2.6" height="10.2" fill="#fff"/><rect x=".8" y="30.1" width="23.4" height="1.9" fill="#6e6e6e"/></svg>
<svg style="left:809px;top:201.8px;" width="26" height="29" viewBox="0 0 26 29"><path fill="none" stroke="#0b2130" stroke-width="2.2" d="M1.2 24.5V3.4a2.2 2.2 0 0 1 2.2-2.2h11.5"/><path fill="#fff" stroke="#0b2130" stroke-width="2.2" stroke-linejoin="round" d="M7 5.6h10.2l7.6 7.6v13.6a1.2 1.2 0 0 1-1.2 1.2H7a1.2 1.2 0 0 1-1.2-1.2V6.8A1.2 1.2 0 0 1 7 5.6z"/><path fill="none" stroke="#0b2130" stroke-width="1.7600000000000002" d="M17.2 5.6v7.6h7.6"/></svg>
<svg style="left:853.6px;top:201px;" width="26.4" height="31" viewBox="0 0 26 31"><path fill="#0b2130" d="M6.2 0.3C4.8 2.5 5.2 5 6.3 7.2L17 25.5l3.3-2.2L8.6 0.6z"/><path fill="#0b2130" d="M19.8 0.3c1.4 2.2 1 4.7-.1 6.9L9 25.5l-3.3-2.2L17.4 0.6z"/><ellipse cx="5.3" cy="24.3" rx="3.3" ry="5.6" transform="rotate(22 5.3 24.3)" fill="#fff" stroke="#0b2130" stroke-width="2.6"/><ellipse cx="20.7" cy="24.3" rx="3.3" ry="5.6" transform="rotate(-22 20.7 24.3)" fill="#fff" stroke="#0b2130" stroke-width="2.6"/><circle cx="13" cy="15" r="1.1" fill="#fff"/></svg>
<svg style="left:903px;top:202px;" width="21" height="26.8" viewBox="0 0 21 27"><rect x=".9" y="3.6" width="15.2" height="17.6" rx=".8" fill="#fff" stroke="#0b2130" stroke-width="1.8"/><path fill="none" stroke="#0b2130" stroke-width="1.5" d="M6.2 3.4V2.6a2.3 2.3 0 0 1 4.6 0v.8"/><rect x="3.6" y="2.8" width="9.8" height="2.6" fill="#0b2130"/><path fill="#fff" stroke="#0b2130" stroke-width="1.8" stroke-linejoin="round" d="M11.2 8.8h8.9v17.3H8V12z"/><path fill="none" stroke="#0b2130" stroke-width="1.2" d="M11.2 8.8V12H8"/></svg>
<svg style="left:955px;top:201px;" width="20" height="27.8" viewBox="0 0 20 28" preserveAspectRatio="none"><rect x="0" y="0" width="20" height="2.89" fill="#777"/><path fill="none" stroke="#777" stroke-width="3.4" d="M10 28V6M1.600 14.600L10 6.200l8.400 8.400"/></svg>
<svg style="left:1001px;top:205.3px;" width="18.2" height="23.3" viewBox="0 3.75 20 24.25" preserveAspectRatio="none"><path fill="none" stroke="#777" stroke-width="3.4" d="M10 28V6M1.600 14.600L10 6.200l8.400 8.400"/></svg>
<svg style="left:1046.2px;top:205.5px;" width="18.4" height="23.3" viewBox="0 5 20 24.25" preserveAspectRatio="none"><path fill="none" stroke="#1a1a1a" stroke-width="3.4" d="M10 5V27M1.600 18.400L10 26.800l8.400-8.400"/></svg>
<svg style="left:1090px;top:202px;" width="20" height="28" viewBox="0 0 20 28" preserveAspectRatio="none"><rect x="0" y="25.11" width="20" height="2.89" fill="#1a1a1a"/><path fill="none" stroke="#1a1a1a" stroke-width="3.4" d="M10 0V22M1.600 13.400L10 21.800l8.400-8.400"/></svg>
<div style="left:1137px;top:203px;width:150px;height:19.8px;background:#fff;border:1px solid #adadad;"></div>
<div style="left:1270px;top:204px;width:16px;height:17.8px;background:#f0f0f0;border-left:1px solid #adadad;"></div>
<svg style="left:1275px;top:211px;" width="6.6" height="3.6" viewBox="0 0 8 4.5"><path fill="#606060" d="M0 0h8L4 4.5z"/></svg>
<span class="t" style="left:1141.5px;top:205.93px;font-size:11px;line-height:14px;color:#1f1f2e;transform:scaleX(0.91);transform-origin:0 50%;">English</span>
<svg style="left:1303px;top:205px;" width="26" height="22" viewBox="0 0 26 22"><rect x="1.1" y="1.1" width="23.8" height="19.8" rx="1.6" fill="#fff" stroke="#0b2130" stroke-width="2.2"/><path fill="#0b2130" d="M3.4 18.800v-3L10 7.600l5.400 6.400 3.600-3.400 3.600 3v5.200z"/><circle cx="18.6" cy="6" r="2.2" fill="#0b2130"/></svg>
<svg style="left:1356px;top:203px;" width="26" height="26" viewBox="0 0 26 26"><circle cx="9.8" cy="9.8" r="8.1" fill="#fff" stroke="#0b2130" stroke-width="3.2"/><path stroke="#0b2130" stroke-width="4" stroke-linecap="round" d="M16 16l8 8"/><path stroke="#0b2130" stroke-width="3.1" d="M4.8 9.8h10"/><path stroke="#0b2130" stroke-width="3.1" d="M9.8 4.8v10"/></svg>
<svg style="left:1401px;top:203px;" width="26" height="26" viewBox="0 0 26 26"><circle cx="9.8" cy="9.8" r="8.1" fill="#fff" stroke="#0b2130" stroke-width="3.2"/><path stroke="#0b2130" stroke-width="4" stroke-linecap="round" d="M16 16l8 8"/><path stroke="#0b2130" stroke-width="3.1" d="M4.8 9.8h10"/></svg>
<svg style="left:1446px;top:203px;" width="26" height="26" viewBox="0 0 26 26"><path fill="#0b2130" d="M0 0h9.6L6.5 3.1l4.6 4.6-3.4 3.4-4.6-4.6L0 9.6z"/><path fill="#0b2130" d="M0 0h9.6L6.5 3.1l4.6 4.6-3.4 3.4-4.6-4.6L0 9.6z" transform="translate(26 0) scale(-1 1)"/><path fill="#0b2130" d="M0 0h9.6L6.5 3.1l4.6 4.6-3.4 3.4-4.6-4.6L0 9.6z" transform="translate(0 26) scale(1 -1)"/><path fill="#0b2130" d="M0 0h9.6L6.5 3.1l4.6 4.6-3.4 3.4-4.6-4.6L0 9.6z" transform="translate(26 26) scale(-1 -1)"/></svg>
<svg style="left:1499px;top:203px;" width="26.5" height="28.5" viewBox="0 0 26 28"><path fill="none" stroke="#0b2130" stroke-width="2.5" d="M1.6 13.2A11.4 11.4 0 0 1 21.6 6.6"/><path fill="#0b2130" d="M25.6 1.2v9.6H16z"/><path fill="none" stroke="#0b2130" stroke-width="2.5" d="M24.4 14.8A11.4 11.4 0 0 1 4.4 21.4"/><path fill="#0b2130" d="M.4 26.8v-9.6H10z"/></svg>
<svg style="left:1541px;top:201px;" width="32" height="31" viewBox="0 0 32 31"><rect x="0" y="0" width="14.6" height="14" rx="1.8" fill="#0b2130"/><rect x="17.4" y="0" width="14.6" height="14" rx="1.8" fill="#0b2130"/><rect x="0" y="16.6" width="14.6" height="14.4" rx="1.8" fill="#0b2130"/><rect x="17.4" y="16.6" width="14.6" height="14.4" rx="1.8" fill="#0b2130"/><path stroke="#fff" stroke-width="2.1" fill="none" d="M2.4 7h9.8M20 4.8h9.6M20 9.2h9.6M2.4 23.8h9.8M7.3 18.9v9.8M21.2 20.2l7.2 7.2M28.4 20.2l-7.2 7.2"/></svg>
<div style="left:1588.1px;top:206.9px;width:11.8px;height:11.8px;border-radius:50%;background:radial-gradient(circle at 40% 35%,#8ff0b0 0%,#52c87e 45%,#2f9e5e 100%);box-shadow:inset 0 0 0 .6px #3a9a62;"></div>
<svg style="left:1605.3px;top:211.3px;" width="6" height="3.4" viewBox="0 0 8 4.5"><path fill="#111" d="M0 0h8L4 4.5z"/></svg>
<svg style="left:1627px;top:204.4px;" width="31.8" height="24.8" viewBox="0 0 32 25"><path fill="#0b2130" d="M0 12.4l4.6-4.6 7.4 7.4L27.2 0 32 4.8 12 24.8z"/></svg>
<span class="t" style="left:1680.59px;top:195.06px;font-size:38.5px;line-height:42px;color:#0b2130;transform:scaleX(0.86);transform-origin:0 50%;">$</span>
<svg style="left:1732.6px;top:203px;" width="18.6" height="26" viewBox="0 0 19 26"><path fill="#fff" stroke="#0b2130" stroke-width="1.6" stroke-linejoin="round" d="M2 .9h9.6L18 7.4V24a1.1 1.1 0 0 1-1.1 1.1H2A1.1 1.1 0 0 1 .9 24V2A1.1 1.1 0 0 1 2 .9z"/><path fill="none" stroke="#0b2130" stroke-width="1.2" d="M11.6.9v6.5H18"/><path stroke="#0b2130" stroke-width="1.7" d="M3.2 14.2h12.4M3.2 17.6h12.4M3.2 21h12.4"/></svg>
<svg style="left:1772.4px;top:200px;" width="27.8" height="31.8" viewBox="0 0 28 32"><path fill="#fff" stroke="#0b2130" stroke-width="2.2" stroke-linejoin="round" d="M2.8 1.1H19l7.9 7.9v20.3a1.6 1.6 0 0 1-1.6 1.6H2.8a1.6 1.6 0 0 1-1.6-1.6V2.7a1.6 1.6 0 0 1 1.6-1.6z"/><path fill="none" stroke="#0b2130" stroke-width="1.6500000000000001" d="M19 1.1V9h7.9"/><text x="13.6" y="27.6" text-anchor="middle" font-family="Liberation Sans,sans-serif" font-weight="bold" font-size="25" fill="#0b2130">x</text></svg>
<svg style="left:1815px;top:201.8px;" width="32" height="28" viewBox="0 0 32 28"><rect x="8.2" y="0" width="15.6" height="4" fill="#0b2130"/><rect x="0" y="6" width="32" height="14.6" rx="2.6" fill="#0b2130"/><circle cx="4.4" cy="10.2" r="1.7" fill="#fff"/><rect x="9.6" y="16" width="12.8" height="10.8" fill="#fff" stroke="#0b2130" stroke-width="2.4"/></svg>
<svg style="left:1870px;top:211.3px;" width="6" height="3.4" viewBox="0 0 8 4.5"><path fill="#111" d="M0 0h8L4 4.5z"/></svg>
<svg style="left:1908.8px;top:206px;" width="31.8" height="19.6" viewBox="7.1 5.9 31.7 20" preserveAspectRatio="none"><path fill="none" stroke="#ff820d" stroke-width="4.1" stroke-linejoin="miter" d="M14 11.5L10 16.1l6.4 6.9 4.2-4.5M15.1 7.4l14.4 15.6 6.4-6.9-6.4-7.1-4.2 4.4"/></svg>
<svg style="left:1964px;top:211.3px;" width="6" height="3.4" viewBox="0 0 8 4.5"><path fill="#111" d="M0 0h8L4 4.5z"/></svg>
<span class="t" style="left:603.7px;top:234.33px;font-size:11px;line-height:14px;color:#1f1f2e;transform:scaleX(0.98);transform-origin:0 50%;">Add / Delete</span>
<span class="t" style="left:812px;top:234.33px;font-size:11px;line-height:14px;color:#1f1f2e;transform:scaleX(0.98);transform-origin:0 50%;">Copy / Paste</span>
<span class="t" style="left:998.7px;top:234.33px;font-size:11px;line-height:14px;color:#1f1f2e;transform:scaleX(0.96);transform-origin:0 50%;">Repositioning</span>
<span class="t" style="left:1216px;top:234.33px;font-size:11px;line-height:14px;color:#1f1f2e;transform:scaleX(0.94);transform-origin:0 50%;">Display</span>
<span class="t" style="left:1400px;top:234.33px;font-size:11px;line-height:14px;color:#1f1f2e;transform:scaleX(0.91);transform-origin:0 50%;">Zoom</span>
<span class="t" style="left:1571.7px;top:234.33px;font-size:11px;line-height:14px;color:#1f1f2e;transform:scaleX(0.98);transform-origin:0 50%;">Verification</span>
<span class="t" style="left:1786px;top:234.33px;font-size:11px;line-height:14px;color:#1f1f2e;transform:scaleX(0.99);transform-origin:0 50%;">Reports</span>
<span class="t" style="left:1924px;top:234.33px;font-size:11px;line-height:14px;color:#1f1f2e;letter-spacing:0.18px;">TakeOff</span>
<div style="left:538px;top:261px;width:12.8px;height:12.8px;background:#fff;border:1px solid #8e8e8e;"></div>
<span class="t" style="left:554.5px;top:261.13px;font-size:11px;line-height:14px;color:#1f1f2e;transform:scaleX(0.95);transform-origin:0 50%;">Option special</span>
<div style="left:649.5px;top:257px;width:40.2px;height:21.5px;background:#dcdcdc;"></div>
<span class="t" style="left:655.7px;top:260.16px;font-size:13.5px;line-height:18px;color:#23232b;font-weight:bold;transform:scaleX(0.93);transform-origin:0 50%;">Cost</span>
<span class="t" style="left:702.5px;top:260.16px;font-size:13.5px;line-height:18px;color:#23232b;font-weight:bold;transform:scaleX(0.94);transform-origin:0 50%;">Admin.</span>
<span class="t" style="left:764.5px;top:260.16px;font-size:13.5px;line-height:18px;color:#23232b;font-weight:bold;transform:scaleX(0.96);transform-origin:0 50%;">Profits</span>
<span class="t" style="left:824.5px;top:260.16px;font-size:13.5px;line-height:18px;color:#23232b;font-weight:bold;transform:scaleX(0.89);transform-origin:0 50%;">Selling</span>
<span class="t" style="left:883px;top:260.16px;font-size:13.5px;line-height:18px;color:#23232b;font-weight:bold;transform:scaleX(0.94);transform-origin:0 50%;">Param.Config.</span>
<span class="t" style="left:988px;top:260.16px;font-size:13.5px;line-height:18px;color:#23232b;font-weight:bold;transform:scaleX(0.96);transform-origin:0 50%;">Opt.Config.</span>
<span class="t" style="left:1078px;top:260.16px;font-size:13.5px;line-height:18px;color:#23232b;font-weight:bold;transform:scaleX(0.95);transform-origin:0 50%;">Shipping.Config.</span>
<span class="t" style="left:1200px;top:260.16px;font-size:13.5px;line-height:18px;color:#23232b;font-weight:bold;transform:scaleX(0.96);transform-origin:0 50%;">Customer Report</span>
<div style="left:693px;top:257.5px;width:1px;height:21px;background:#c8c8c8;"></div>
<div style="left:755px;top:257.5px;width:1px;height:21px;background:#c8c8c8;"></div>
<div style="left:815px;top:257.5px;width:1px;height:21px;background:#c8c8c8;"></div>
<div style="left:873px;top:257.5px;width:1px;height:21px;background:#c8c8c8;"></div>
<div style="left:978px;top:257.5px;width:1px;height:21px;background:#c8c8c8;"></div>
<div style="left:1068px;top:257.5px;width:1px;height:21px;background:#c8c8c8;"></div>
<div style="left:1190px;top:257.5px;width:1px;height:21px;background:#c8c8c8;"></div>
<div style="left:1315px;top:257.5px;width:1px;height:21px;background:#c8c8c8;"></div>
<div style="left:1351px;top:255px;width:1px;height:31px;background:#c8c8c8;"></div>
<svg style="left:1324.5px;top:260px;" width="16" height="16" viewBox="0 0 16 16"><path fill="#0b2130" d="M15.82 6.33L15.82 9.67L13.77 9.98L13.48 10.68L14.71 12.35L12.35 14.71L10.68 13.48L9.98 13.77L9.67 15.82L6.33 15.82L6.02 13.77L5.32 13.48L3.65 14.71L1.29 12.35L2.52 10.68L2.23 9.98L0.18 9.67L0.18 6.33L2.23 6.02L2.52 5.32L1.29 3.65L3.65 1.29L5.32 2.52L6.02 2.23L6.33 0.18L9.67 0.18L9.98 2.23L10.68 2.52L12.35 1.29L14.71 3.65L13.48 5.32L13.77 6.02z"/><circle cx="8" cy="8" r="2.700" fill="#fff"/></svg>
<div style="left:1638px;top:258px;width:176.8px;height:19.7px;background:#fff;border:1px solid #adadad;"></div>
<div style="left:1798px;top:259px;width:15.8px;height:17.7px;background:#f0f0f0;border-left:1px solid #adadad;"></div>
<svg style="left:1803px;top:266.2px;" width="6.6" height="3.6" viewBox="0 0 8 4.5"><path fill="#606060" d="M0 0h8L4 4.5z"/></svg>
<span class="t" style="left:1642px;top:260.93px;font-size:11px;line-height:14px;color:#1f1f2e;transform:scaleX(0.98);transform-origin:0 50%;">Assembly and options</span>
<svg style="left:538px;top:288px;" width="24" height="23" viewBox="0 0 20 20"><path fill="#0b1a26" d="M13.200 2.500l4.300 4.300L6.300 18 .6 19.400 2 13.700z"/><path fill="#0b1a26" d="M14.300 1.400l1-1a1.500 1.500 0 0 1 2.100 0l2.200 2.200a1.500 1.500 0 0 1 0 2.100l-1 1z"/><path fill="#fff" d="M2.900 14.300l2.800 2.800-3.400 .9z" opacity=".0"/></svg>
<svg style="left:569.5px;top:290px;" width="19" height="19" viewBox="0 0 16 16"><path fill="#fff" stroke="#7a7a7a" stroke-width="1.700" stroke-linejoin="round" d="M.9 .9h12l2.200 2.200v12H.9z"/><rect x="3.400" y=".9" width="8.400" height="5" fill="#7a7a7a"/><rect x="8" y="1.500" width="2" height="3.200" fill="#fff"/></svg>
<svg style="left:597.5px;top:292.8px;" width="16.4" height="17.2" viewBox="0 0 16 17" preserveAspectRatio="none"><path fill="#7a7a7a" d="M7 0v4c5.800 0 9.600 3 8.800 12.600-1.400-5.400-3.800-7-8.800-7v4.200L0 6.800z"/></svg>
<div style="left:623px;top:291px;width:497.5px;height:19.5px;background:#fff;border:1px solid #c9c9c9;border-top:2px solid #7f7f7f;border-left:2px solid #7f7f7f;"></div>
<svg style="left:1149.5px;top:292px;" width="19.5" height="19" viewBox="0 0 20 20" preserveAspectRatio="none"><path fill="#050d18" d="M.6 3.600L8 12v6.800a1 1 0 0 0 1 1h2a1 1 0 0 0 1-1V12l7.400-8.400z"/><ellipse cx="10" cy="3.500" rx="9" ry="2.900" fill="#fff" stroke="#050d18" stroke-width="1.800"/><path stroke="#fff" stroke-width="1.300" d="M8.300 7.200l3.400 3.400M11.700 7.200l-3.400 3.400"/></svg>
<svg style="left:1183px;top:294px;" width="16.2" height="16.2" viewBox="0 0 26 28"><path fill="none" stroke="#0b2130" stroke-width="2.5" d="M1.6 13.2A11.4 11.4 0 0 1 21.6 6.6"/><path fill="#0b2130" d="M25.6 1.2v9.6H16z"/><path fill="none" stroke="#0b2130" stroke-width="2.5" d="M24.4 14.8A11.4 11.4 0 0 1 4.4 21.4"/><path fill="#0b2130" d="M.4 26.8v-9.6H10z"/></svg>
<div style="left:1208.7px;top:291.2px;width:1324.3px;height:19.5px;background:#fff;border:1px solid #adadad;"></div>
<div style="left:2516.5px;top:292.2px;width:15.5px;height:17.5px;background:#f0f0f0;border-left:1px solid #adadad;"></div>
<svg style="left:2521.2px;top:299.2px;" width="6.6" height="3.6" viewBox="0 0 8 4.5"><path fill="#606060" d="M0 0h8L4 4.5z"/></svg>
<span class="t" style="left:1212.5px;top:294.13px;font-size:11px;line-height:14px;color:#1f1f2e;transform:scaleX(0.97);transform-origin:0 50%;">Search for an item</span>
<div style="left:516px;top:318px;width:2047px;height:549px;background:#ababab;border-left:1px solid #9c9c9c;border-bottom:1px solid #8a8a8a;border-right:1px solid #8a8a8a;"></div>
<div style="left:517px;top:318px;width:2045.5px;height:20.7px;background:#212935;"></div>
<span class="t" style="left:520.25px;top:320.85px;font-size:12.5px;line-height:16px;color:#fff;font-weight:bold;transform:scaleX(0.86);transform-origin:0 50%;">1</span>
<div style="left:529px;top:318.5px;width:1px;height:20px;background:#dfe1e4;"></div>
<span class="t" style="left:532.75px;top:320.85px;font-size:12.5px;line-height:16px;color:#fff;font-weight:bold;transform:scaleX(0.94);transform-origin:0 50%;">2</span>
<div style="left:542px;top:318.5px;width:1px;height:20px;background:#dfe1e4;"></div>
<span class="t" style="left:546.5px;top:322.35px;font-size:12.5px;line-height:16px;color:#fff;font-weight:bold;letter-spacing:0.14px;">*</span>
<div style="left:555px;top:318.5px;width:1px;height:20px;background:#dfe1e4;"></div>
<span class="t" style="left:568.75px;top:320.85px;font-size:12.5px;line-height:16px;color:#fff;font-weight:bold;transform:scaleX(0.97);transform-origin:0 50%;">Edit</span>
<div style="left:605px;top:318.5px;width:1px;height:20px;background:#dfe1e4;"></div>
<span class="t" style="left:613.5px;top:320.85px;font-size:12.5px;line-height:16px;color:#fff;font-weight:bold;transform:scaleX(0.87);transform-origin:0 50%;">O</span>
<div style="left:630px;top:318.5px;width:1px;height:20px;background:#dfe1e4;"></div>
<span class="t" style="left:634px;top:320.85px;font-size:12.5px;line-height:16px;color:#fff;font-weight:bold;transform:scaleX(0.96);transform-origin:0 50%;">Incl.</span>
<div style="left:661px;top:318.5px;width:1px;height:20px;background:#dfe1e4;"></div>
<span class="t" style="left:676.5px;top:320.85px;font-size:12.5px;line-height:16px;color:#fff;font-weight:bold;transform:scaleX(0.9);transform-origin:0 50%;">Sorting Code</span>
<div style="left:762px;top:318.5px;width:1px;height:20px;background:#dfe1e4;"></div>
<span class="t" style="left:765px;top:320.85px;font-size:12.5px;line-height:16px;color:#fff;font-weight:bold;letter-spacing:0.19px;">Type</span>
<div style="left:797px;top:318.5px;width:1px;height:20px;background:#dfe1e4;"></div>
<span class="t" style="left:931.75px;top:320.85px;font-size:12.5px;line-height:16px;color:#fff;font-weight:bold;transform:scaleX(0.97);transform-origin:0 50%;">Name</span>
<div style="left:1099px;top:318.5px;width:1px;height:20px;background:#dfe1e4;"></div>
<span class="t" style="left:1116.25px;top:320.85px;font-size:12.5px;line-height:16px;color:#fff;font-weight:bold;transform:scaleX(0.94);transform-origin:0 50%;">Alt.</span>
<div style="left:1152px;top:318.5px;width:1px;height:20px;background:#dfe1e4;"></div>
<span class="t" style="left:1156px;top:320.55px;font-size:12.5px;line-height:16px;color:#fff;font-weight:bold;transform:scaleX(0.96);transform-origin:0 50%;">+</span>
<div style="left:1167px;top:318.5px;width:1px;height:20px;background:#dfe1e4;"></div>
<span class="t" style="left:1175.5px;top:320.85px;font-size:12.5px;line-height:16px;color:#fff;font-weight:bold;transform:scaleX(0.9);transform-origin:0 50%;">Identification</span>
<div style="left:1254px;top:318.5px;width:1px;height:20px;background:#dfe1e4;"></div>
<span class="t" style="left:1257px;top:320.55px;font-size:12.5px;line-height:16px;color:#fff;font-weight:bold;transform:scaleX(0.96);transform-origin:0 50%;">+</span>
<div style="left:1267px;top:318.5px;width:1px;height:20px;background:#dfe1e4;"></div>
<span class="t" style="left:1270px;top:320.55px;font-size:12.5px;line-height:16px;color:#fff;font-weight:bold;transform:scaleX(0.96);transform-origin:0 50%;">+</span>
<div style="left:1280px;top:318.5px;width:1px;height:20px;background:#dfe1e4;"></div>
<span class="t" style="left:1301.5px;top:320.85px;font-size:12.5px;line-height:16px;color:#fff;font-weight:bold;transform:scaleX(0.93);transform-origin:0 50%;">Len-s</span>
<div style="left:1354px;top:318.5px;width:1px;height:20px;background:#dfe1e4;"></div>
<span class="t" style="left:1377.5px;top:320.85px;font-size:12.5px;line-height:16px;color:#fff;font-weight:bold;transform:scaleX(0.95);transform-origin:0 50%;">Hght</span>
<div style="left:1428px;top:318.5px;width:1px;height:20px;background:#dfe1e4;"></div>
<span class="t" style="left:1446.5px;top:320.85px;font-size:12.5px;line-height:16px;color:#fff;font-weight:bold;transform:scaleX(0.94);transform-origin:0 50%;">Surf-s</span>
<div style="left:1499px;top:318.5px;width:1px;height:20px;background:#dfe1e4;"></div>
<span class="t" style="left:1503.5px;top:320.85px;font-size:12.5px;line-height:16px;color:#fff;font-weight:bold;letter-spacing:0.05px;">C/P</span>
<div style="left:1529px;top:318.5px;width:1px;height:20px;background:#dfe1e4;"></div>
<span class="t" style="left:1532px;top:320.55px;font-size:12.5px;line-height:16px;color:#29a3e8;transform:scaleX(0.96);transform-origin:0 50%;">+</span>
<div style="left:1542px;top:318.5px;width:1px;height:20px;background:#dfe1e4;"></div>
<span class="t" style="left:1545.25px;top:320.55px;font-size:12.5px;line-height:16px;color:#f47b20;transform:scaleX(0.96);transform-origin:0 50%;">+</span>
<div style="left:1555px;top:318.5px;width:1px;height:20px;background:#dfe1e4;"></div>
<span class="t" style="left:1558.25px;top:320.55px;font-size:12.5px;line-height:16px;color:#b98a12;transform:scaleX(0.96);transform-origin:0 50%;">+</span>
<div style="left:1568px;top:318.5px;width:1px;height:20px;background:#dfe1e4;"></div>
<span class="t" style="left:1571px;top:320.55px;font-size:12.5px;line-height:16px;color:#ff3d7f;transform:scaleX(0.96);transform-origin:0 50%;">+</span>
<div style="left:1581px;top:318.5px;width:1px;height:20px;background:#dfe1e4;"></div>
<span class="t" style="left:1591.75px;top:320.85px;font-size:12.5px;line-height:16px;color:#fff;font-weight:bold;transform:scaleX(0.92);transform-origin:0 50%;">M fin. U Cost</span>
<div style="left:1672px;top:318.5px;width:1px;height:20px;background:#dfe1e4;"></div>
<span class="t" style="left:1713px;top:320.85px;font-size:12.5px;line-height:16px;color:#fff;font-weight:bold;transform:scaleX(0.93);transform-origin:0 50%;">Fin. M Qty</span>
<div style="left:1808px;top:318.5px;width:1px;height:20px;background:#dfe1e4;"></div>
<span class="t" style="left:1815.25px;top:320.85px;font-size:12.5px;line-height:16px;color:#29a3e8;font-weight:bold;transform:scaleX(0.91);transform-origin:0 50%;">Fin. mat. T Cost</span>
<div style="left:1908px;top:318.5px;width:1px;height:20px;background:#dfe1e4;"></div>
<span class="t" style="left:1923px;top:320.85px;font-size:12.5px;line-height:16px;color:#f47b20;font-weight:bold;transform:scaleX(0.98);transform-origin:0 50%;">% Diff.</span>
<div style="left:1976px;top:318.5px;width:1px;height:20px;background:#dfe1e4;"></div>
<span class="t" style="left:2012.25px;top:320.85px;font-size:12.5px;line-height:16px;color:#f47b20;font-weight:bold;transform:scaleX(0.9);transform-origin:0 50%;">Fin. labor H</span>
<div style="left:2110px;top:318.5px;width:1px;height:20px;background:#dfe1e4;"></div>
<span class="t" style="left:2116.75px;top:320.85px;font-size:12.5px;line-height:16px;color:#f47b20;font-weight:bold;transform:scaleX(0.89);transform-origin:0 50%;">Fin. labor T Cost</span>
<div style="left:2211px;top:318.5px;width:1px;height:20px;background:#dfe1e4;"></div>
<span class="t" style="left:2214px;top:320.55px;font-size:12.5px;line-height:16px;color:#b98a12;transform:scaleX(0.96);transform-origin:0 50%;">+</span>
<div style="left:2224px;top:318.5px;width:1px;height:20px;background:#dfe1e4;"></div>
<span class="t" style="left:2237.25px;top:320.85px;font-size:12.5px;line-height:16px;color:#ff3d7f;font-weight:bold;transform:scaleX(0.86);transform-origin:0 50%;">Fin. SC T Cost</span>
<div style="left:2324px;top:318.5px;width:1px;height:20px;background:#dfe1e4;"></div>
<span class="t" style="left:2338.25px;top:320.85px;font-size:12.5px;line-height:16px;color:#00a890;font-weight:bold;transform:scaleX(0.93);transform-origin:0 50%;">U Cost Other</span>
<div style="left:2424px;top:318.5px;width:1px;height:20px;background:#dfe1e4;"></div>
<span class="t" style="left:2445.25px;top:320.85px;font-size:12.5px;line-height:16px;color:#fff;font-weight:bold;transform:scaleX(0.92);transform-origin:0 50%;">Fin. T Cost</span>
<div style="left:2525px;top:318.5px;width:1px;height:20px;background:#dfe1e4;"></div>
<div style="left:2526px;top:318.5px;width:36px;height:20px;overflow:hidden;"><span class="t" style="left:17px;top:2.200px;font-size:12.500px;line-height:16px;font-weight:bold;color:#fff;letter-spacing:-.2px;">Status</span></div>
<div style="left:517px;top:338.7px;width:2045.5px;height:20px;background:#fff;"></div>
<div style="left:517px;top:360.3px;width:2045.5px;height:53.7px;background:#c9ccd9;"></div>
<div style="left:517px;top:359px;width:2045px;height:2px;background:#000;"></div>
<div style="left:517px;top:376px;width:2045px;height:2px;background:#000;"></div>
<div style="left:517px;top:414px;width:2045px;height:1px;background:#f2f2f2;"></div>
<div style="left:517px;top:415px;width:2045px;height:1px;background:#6a6a6a;"></div>
<div style="left:519px;top:344px;width:9px;height:9px;background:#fff;border:1px solid #8c9bb5;"></div>
<div style="left:521px;top:348px;width:5px;height:1px;background:#2a3f86;"></div>
<div style="left:523px;top:353px;width:1px;height:52px;background:#222;"></div>
<div style="left:523px;top:386px;width:13px;height:1px;background:#222;"></div>
<div style="left:523px;top:404px;width:13px;height:1px;background:#222;"></div>
<div style="left:574px;top:342px;width:13px;height:13px;background:#fff;border:1px solid #8e8f8f;box-shadow:inset 0 0 0 1px #f4f4f4, inset 1.500px 1.500px 0 1px #dcdde6;"></div>
<svg style="left:576.6px;top:344.2px;" width="8.4" height="9" viewBox="0 0 8.400 9"><path fill="none" stroke="#2d3f86" stroke-width="1.800" d="M.8 4.400L3.300 7.600 7.700 .6"/></svg>
<div style="left:605.5px;top:339.5px;width:25px;height:18.7px;background:#f0c800;"></div>
<span class="t" style="left:613.9px;top:341.2px;font-size:12.5px;line-height:16px;color:#222;transform:scaleX(0.84);transform-origin:0 50%;">O</span>
<div style="left:605.5px;top:361px;width:25px;height:18px;background:#f0c800;"></div>
<span class="t" style="left:613.9px;top:362.35px;font-size:12.5px;line-height:16px;color:#222;transform:scaleX(0.84);transform-origin:0 50%;">O</span>
<div style="left:605.5px;top:395px;width:25px;height:19px;background:#f0c800;"></div>
<span class="t" style="left:613.9px;top:396.85px;font-size:12.5px;line-height:16px;color:#222;transform:scaleX(0.84);transform-origin:0 50%;">O</span>
<span class="t" style="left:666px;top:341.03px;font-size:11px;line-height:14px;color:#000;transform:scaleX(0.92);transform-origin:0 50%;">01A</span>
<span class="t" style="left:800.7px;top:341.03px;font-size:11px;line-height:14px;color:#000;letter-spacing:0.01px;">Z Canexel siding</span>
<div style="left:1281px;top:339px;width:219px;height:18.7px;background:#f0c800;"></div>
<span class="t" style="left:1295px;top:341.24px;font-size:11.5px;line-height:15px;color:#000;font-weight:bold;letter-spacing:0.28px;">0.00</span>
<span class="t" style="left:1325px;top:341.24px;font-size:11.5px;line-height:15px;color:#000;font-weight:bold;letter-spacing:0.17px;">ft</span>
<span class="t" style="left:1368.7px;top:341.24px;font-size:11.5px;line-height:15px;color:#000;font-weight:bold;letter-spacing:0.28px;">0.00</span>
<span class="t" style="left:1398.7px;top:341.24px;font-size:11.5px;line-height:15px;color:#000;font-weight:bold;letter-spacing:0.17px;">ft</span>
<span class="t" style="left:1443px;top:341.03px;font-size:11px;line-height:14px;color:#000;transform:scaleX(0.96);transform-origin:0 50%;text-decoration:underline;">0.00</span>
<span class="t" style="left:1469.5px;top:341.03px;font-size:11px;line-height:14px;color:#000;letter-spacing:0.59px;text-decoration:underline;">ft2</span>
<span class="t" style="left:1750.7px;top:340.54px;font-size:11.5px;line-height:15px;color:#000;transform:scaleX(0.89);transform-origin:0 50%;">1.00</span>
<span class="t" style="left:1777px;top:341.53px;font-size:11px;line-height:14px;color:#000;letter-spacing:0.07px;">unit</span>
<div style="left:1253px;top:339px;width:1px;height:76px;background:#4a4a4a;"></div>
<div style="left:663px;top:360.2px;width:97.6px;height:16px;background:#c9ccd9;border:1px solid #1f5fbf;"></div>
<span class="t" style="left:666px;top:361.33px;font-size:11px;line-height:14px;color:#000;transform:scaleX(0.93);transform-origin:0 50%;">07M</span>
<svg style="left:771px;top:361.7px;" width="16.4" height="16" viewBox="0 0 16 16"><path fill="#1c1c1c" d="M5 0h6v2.600H5zM1.500 3.600h5.200v2.600H1.500zM7.700 3.600h5.200v2.600H7.700zM3 7.200h5.200v2.600H3zM9.200 7.200h5.200v2.600H9.200zM0 10.800h4.700v2.600H0zM5.700 10.800h5.200v2.600H5.700zM11.900 10.800H16v2.600h-4.100zM0 14.400h16V16H0z"/></svg>
<span class="t" style="left:800.7px;top:361.33px;font-size:11px;line-height:14px;color:#000;letter-spacing:0.07px;">12&quot; Canexel RidgeWood D-5 Siding Plank (20)</span>
<span class="t" style="left:1170.7px;top:361.33px;font-size:11px;line-height:14px;color:#000;letter-spacing:0.31px;">Joint</span>
<div style="left:1281px;top:361px;width:74px;height:18px;background:#fff8e1;"></div>
<span class="t" style="left:1295px;top:361.54px;font-size:11.5px;line-height:15px;color:#000;font-weight:bold;letter-spacing:0.28px;">0.00</span>
<span class="t" style="left:1325px;top:361.54px;font-size:11.5px;line-height:15px;color:#000;font-weight:bold;letter-spacing:0.48px;">ft2</span>
<div style="left:1530.3px;top:361px;width:11px;height:15px;overflow:hidden;"><span class="t" style="left:-3.500px;top:.6px;font-size:11.500px;line-height:14px;color:#3fa9f5;">65</span></div>
<span class="t" style="left:1637.5px;top:361.33px;font-size:11px;line-height:14px;color:#000;transform:scaleX(0.97);transform-origin:0 50%;">$23.65</span>
<span class="t" style="left:1777px;top:361.33px;font-size:11px;line-height:14px;color:#000;letter-spacing:0.01px;">Box</span>
<span class="t" style="left:1313.75px;top:380.71px;font-size:9.5px;line-height:12px;color:#222;transform:scaleX(0.88);transform-origin:0 50%;">Q</span>
<span class="t" style="left:1381.75px;top:380.71px;font-size:9.5px;line-height:12px;color:#222;transform:scaleX(0.92);transform-origin:0 50%;">LUC</span>
<span class="t" style="left:666px;top:396.93px;font-size:11px;line-height:14px;color:#000;transform:scaleX(0.95);transform-origin:0 50%;">07T</span>
<svg style="left:771px;top:396.8px;" width="16.5" height="17.2" viewBox="0 0 16.500 17.500"><circle cx="7.200" cy="1.900" r="1.700" fill="#3a3a3a"/><path fill="none" stroke="#3a3a3a" stroke-width="1.500" d="M3.200 16.500l2-5.500 1-5.200M6.200 5.800l3 2.200 2.600 3.600M6.600 10.600l2.600 2.400.6 3.600M5.800 6.600L3 8.800l.4 2.600"/><path fill="#222" d="M10.800 17.200l2.800-4.200 2.800 4.200z"/></svg>
<span class="t" style="left:800.7px;top:396.93px;font-size:11px;line-height:14px;color:#000;letter-spacing:0.19px;">Install Canexel Siding (ft2)</span>
<span class="t" style="left:1171px;top:396.93px;font-size:11px;line-height:14px;color:#000;transform:scaleX(0.91);transform-origin:0 50%;">LAB</span>
<div style="left:1281px;top:395px;width:74px;height:19px;background:#fff8e1;"></div>
<span class="t" style="left:1298px;top:396.93px;font-size:11px;line-height:14px;color:#e00000;letter-spacing:0.02px;text-decoration:underline;">0.00</span>
<span class="t" style="left:1325px;top:396.93px;font-size:11px;line-height:14px;color:#e00000;letter-spacing:0.52px;text-decoration:underline;">ft2</span>
<div style="left:1355px;top:395px;width:74px;height:19px;background:#f0c800;"></div>
<span class="t" style="left:1368.7px;top:397.14px;font-size:11.5px;line-height:15px;color:#000;font-weight:bold;letter-spacing:0.28px;">3.17</span>
<span class="t" style="left:1398.7px;top:397.14px;font-size:11.5px;line-height:15px;color:#000;font-weight:bold;letter-spacing:1.03px;">$/ft2</span>
<div style="left:1542.3px;top:397px;width:11px;height:15px;overflow:hidden;"><span class="t" style="left:-3.500px;top:.6px;font-size:11.500px;line-height:14px;color:#f47b20;">17</span></div>
<span class="t" style="left:1643px;top:396.93px;font-size:11px;line-height:14px;color:#000;transform:scaleX(0.98);transform-origin:0 50%;">$3.17</span>
<span class="t" style="left:1777px;top:396.93px;font-size:11px;line-height:14px;color:#000;letter-spacing:0.42px;">ft2</span>
<div style="left:523.7px;top:353.6px;width:29.2px;height:29.2px;background:#8c0b0b;border-radius:50%;"></div>
<span class="t" style="left:533.16px;top:357.72px;font-size:18.5px;line-height:22px;color:#fff;">1</span>
<div style="left:517px;top:849px;width:2045.5px;height:16.7px;background:#f0f0f0;border-top:1px solid #dcdcdc;"></div>
<div style="left:534px;top:850px;width:1837px;height:15.7px;background:#c1c1c1;"></div>
<svg style="left:523px;top:853.5px;" width="5.5" height="8.5" viewBox="0 0 5.500 8.500"><path fill="none" stroke="#505050" stroke-width="2" d="M4.700 .6L1 4.250l3.700 3.650"/></svg>
<svg style="left:2550.5px;top:853.5px;" width="5.5" height="8.5" viewBox="0 0 5.500 8.500"><path fill="none" stroke="#202020" stroke-width="1.800" d="M.8 .6L4.500 4.250.8 7.900"/></svg>
<div style="left:2562px;top:870px;width:1px;height:459px;background:#000;"></div>
<div style="left:516px;top:1328px;width:122px;height:1px;background:#000;"></div>
<div style="left:694px;top:1328px;width:1869px;height:1px;background:#000;"></div>
<div style="left:519px;top:873.3px;width:2041.3px;height:16.6px;background:#fff;border:1px solid #333;"></div>
<span class="t" style="left:520.8px;top:874.04px;font-size:11.5px;line-height:15px;color:#222;transform:scaleX(0.91);transform-origin:0 50%;">Settings</span>
<svg style="left:2548.8px;top:877px;" width="6.5" height="9" viewBox="0 0 7 9"><path fill="none" stroke="#111" stroke-width="1.500" d="M1.200 .8h4.600M1.900 .6v4.400M5.200 .6v4.400M0 5.200h7M3.500 5.200V9"/><rect x="3.600" y=".6" width="2.200" height="4.600" fill="#111"/></svg>
<div style="left:527px;top:898px;width:2023px;height:41.8px;border:1px solid #bcbcbc;"></div>
<div style="left:533.5px;top:891px;width:89px;height:14px;background:#fff;"></div>
<span class="t" style="left:536px;top:892.33px;font-size:11px;line-height:14px;color:#1f1f2e;transform:scaleX(0.95);transform-origin:0 50%;">Calculation model</span>
<div style="left:536px;top:912.5px;width:346px;height:19.3px;background:#fff;border:1px solid #adadad;"></div>
<div style="left:866px;top:913.5px;width:15px;height:17.3px;background:#f0f0f0;border-left:1px solid #adadad;"></div>
<svg style="left:870.5px;top:920.4px;" width="6.6" height="3.6" viewBox="0 0 8 4.5"><path fill="#606060" d="M0 0h8L4 4.5z"/></svg>
<span class="t" style="left:539.3px;top:915.33px;font-size:11px;line-height:14px;color:#1f1f2e;transform:scaleX(0.97);transform-origin:0 50%;">Find for model</span>
<div style="left:888.7px;top:911px;width:24.6px;height:24.3px;background:#fff;border-right:1.500px solid #111;border-bottom:1.500px solid #111;"></div>
<svg style="left:894.6px;top:917.6px;" width="17" height="16.2" viewBox="0 0 20 20" preserveAspectRatio="none"><path fill="#050d18" d="M.6 3.600L8 12v6.800a1 1 0 0 0 1 1h2a1 1 0 0 0 1-1V12l7.400-8.400z"/><ellipse cx="10" cy="3.500" rx="9" ry="2.900" fill="#fff" stroke="#050d18" stroke-width="1.800"/><path stroke="#fff" stroke-width="1.300" d="M8.300 7.200l3.400 3.400M11.700 7.200l-3.400 3.400"/></svg>
<svg style="left:932.8px;top:924.3px;" width="1" height="1" viewBox="0 0 1 1"><path fill="none" stroke="#0b1a26" stroke-width="3.4" stroke-linecap="round" stroke-linejoin="round" d="M-10.7 0H9.9M2.4 -8.3L10.7 0L2.4 8.3"/></svg>
<span class="t" style="left:963.7px;top:917.13px;font-size:11px;line-height:14px;color:#1f1f2e;letter-spacing:0.3px;">Item :</span>
<div style="left:1000px;top:914px;width:324px;height:18.6px;background:#f0f0f0;border:1px solid #a3abbd;"></div>
<span class="t" style="left:1002.8px;top:916.33px;font-size:11px;line-height:14px;color:#111;transform:scaleX(0.96);transform-origin:0 50%;white-space:pre;">12&quot; Canexel RidgeWood D-5 Siding Plank (20) -  - Joint</span>
<span class="t" style="left:1332px;top:917.13px;font-size:11px;line-height:14px;color:#1f1f2e;letter-spacing:0.01px;">Associated model</span>
<div style="left:1420px;top:913.8px;width:302.3px;height:18.8px;background:#f0f0f0;border:1px solid #a3abbd;"></div>
<div style="left:1725px;top:912px;width:25.3px;height:22.8px;background:#fff;border-right:2px solid #111;border-bottom:2px solid #111;"></div>
<span class="t" style="left:1733.57px;top:915.94px;font-size:11.5px;line-height:15px;color:#222;">X</span>
<div style="left:528px;top:953px;width:636.3px;height:356.3px;border:1px solid #bcbcbc;"></div>
<div style="left:533.5px;top:946px;width:61.5px;height:14px;background:#fff;"></div>
<span class="t" style="left:536px;top:947.33px;font-size:11px;line-height:14px;color:#1f1f2e;transform:scaleX(0.99);transform-origin:0 50%;">Settings list</span>
<span class="t" style="left:551px;top:967.64px;font-size:11.5px;line-height:15px;color:#111;transform:scaleX(0.95);transform-origin:0 50%;">System</span>
<div style="left:597px;top:965px;width:40.3px;height:20px;background:#000;"></div>
<span class="t" style="left:603.7px;top:967.64px;font-size:11.5px;line-height:15px;color:#fff;transform:scaleX(0.95);transform-origin:0 50%;">Prive</span>
<div style="left:538px;top:985px;width:620.5px;height:34px;background:#fff;border-top:2px solid #6d6d6d;border-left:2px solid #6d6d6d;border-right:1px solid #e3e3e3;border-bottom:1px solid #e3e3e3;"></div>
<svg style="left:548.3px;top:995.5px;" width="15.6" height="15.6" viewBox="0 0 26 26"><rect x="9.8" y="0" width="6.4" height="26" rx=".8" fill="#050d18"/><rect x="0" y="9.8" width="26" height="6.4" rx=".8" fill="#050d18"/></svg>
<svg style="left:578.3px;top:993px;" width="19.2" height="19.4" viewBox="0 0 19 19.400"><path fill="none" stroke="#0b2130" stroke-width="1.300" d="M6.300 2.400V1.300a.7.7 0 0 1 .7-.7h5a.7.7 0 0 1 .7.700v1.100"/><rect x="0" y="2.200" width="19" height="2.400" rx=".5" fill="#0b2130"/><path fill="#0b2130" d="M1.300 5.800h16.400v12.600a1 1 0 0 1-1 1H2.300a1 1 0 0 1-1-1z"/><path stroke="#fff" stroke-width="1.300" d="M4.900 7.800v9M8 7.800v9M11 7.800v9M14.100 7.800v9"/></svg>
<svg style="left:614px;top:993px;" width="20" height="19.6" viewBox="0 0 20 20" preserveAspectRatio="none"><path fill="#050d18" d="M.6 3.600L8 12v6.800a1 1 0 0 0 1 1h2a1 1 0 0 0 1-1V12l7.400-8.400z"/><ellipse cx="10" cy="3.500" rx="9" ry="2.900" fill="#fff" stroke="#050d18" stroke-width="1.800"/><path stroke="#fff" stroke-width="1.300" d="M8.300 7.200l3.400 3.400M11.700 7.200l-3.400 3.400"/></svg>
<svg style="left:646px;top:999.5px;" width="20" height="8.4" viewBox="0 0 20 8.6"><rect x="6.200" y="0" width="13.800" height="2.800" rx=".6" fill="#050d18"/><rect x="0" y="5.600" width="14.400" height="2.800" rx=".6" fill="#050d18"/></svg>
<svg style="left:680px;top:996.5px;" width="16" height="12.8" viewBox="0 0 16 13"><path fill="none" stroke="#0b2130" stroke-width="1.3" d="M.8 0v11.900H16"/><path stroke="#0b2130" stroke-width="1.4" d="M3.800 10.600V6.800M6.800 10.600V3.600M9.800 10.600V6.200M12.800 10.600V.8"/></svg>
<svg style="left:709.7px;top:994.6px;" width="20.2" height="17.2" viewBox="0 0 32 28"><rect x="8.2" y="0" width="15.6" height="4" fill="#050d18"/><rect x="0" y="6" width="32" height="14.6" rx="2.6" fill="#050d18"/><circle cx="4.4" cy="10.2" r="1.7" fill="#fff"/><rect x="9.6" y="16" width="12.8" height="10.8" fill="#fff" stroke="#050d18" stroke-width="2.4"/></svg>
<svg style="left:744px;top:995px;" width="17" height="16.2" viewBox="0 0 26 28"><path fill="none" stroke="#0b2130" stroke-width="2.6" d="M1.6 13.2A11.4 11.4 0 0 1 21.6 6.6"/><path fill="#0b2130" d="M25.6 1.2v9.6H16z"/><path fill="none" stroke="#0b2130" stroke-width="2.6" d="M24.4 14.8A11.4 11.4 0 0 1 4.4 21.4"/><path fill="#0b2130" d="M.4 26.8v-9.6H10z"/></svg>
<svg style="left:774px;top:993px;" width="20" height="19.4" viewBox="0 0 20 20"><path fill="#0b2130" d="M13.200 2.500l4.300 4.300L6.300 18 .6 19.400 2 13.700z"/><path fill="#0b2130" d="M14.300 1.400l1-1a1.500 1.500 0 0 1 2.100 0l2.200 2.200a1.500 1.500 0 0 1 0 2.100l-1 1z"/><path fill="#fff" d="M2.900 14.300l2.800 2.800-3.400 .9z" opacity=".0"/></svg>
<svg style="left:806.8px;top:993px;" width="18" height="18" viewBox="0 0 18 18"><path fill="none" stroke="#1f3550" stroke-width="1.700" d="M2.600 8.200A6.600 6.600 0 0 1 13.800 4.600"/><path fill="#1f3550" d="M16.800 1v6.400h-6.400z"/><text x="0" y="14.600" font-family="Liberation Serif,serif" font-size="10.500" fill="#222">a</text><text x="9.600" y="17.800" font-family="Liberation Serif,serif" font-size="10" fill="#222">b</text></svg>
<svg style="left:842.5px;top:992px;" width="16" height="20" viewBox="0 0 16 20"><path fill="#050d18" d="M4 0h8v8.4h4L8 15.8 0 8.4h4z"/><rect x="5.2" y="4" width="5.6" height="1.8" fill="#fff"/><rect x="7.1" y="2.1" width="1.8" height="5.6" fill="#fff"/><rect x="1" y="17.8" width="14.6" height="1.8" fill="#050d18"/></svg>
<div style="left:538px;top:1021px;width:620.5px;height:283.8px;background:#fff;border:1px solid #6d6d6d;"></div>
<div style="left:539px;top:1021px;width:601.5px;height:21px;background:#212935;"></div>
<div style="left:558px;top:1022.5px;width:1px;height:19.5px;background:#dfe1e4;"></div>
<div style="left:648px;top:1022.5px;width:1px;height:19.5px;background:#dfe1e4;"></div>
<div style="left:794px;top:1022.5px;width:1px;height:19.5px;background:#dfe1e4;"></div>
<div style="left:1075px;top:1022.5px;width:1px;height:19.5px;background:#dfe1e4;"></div>
<div style="left:1125px;top:1022.5px;width:1px;height:19.5px;background:#dfe1e4;"></div>
<span class="t" style="left:575px;top:1024.15px;font-size:12.5px;line-height:16px;color:#fff;font-weight:bold;transform:scaleX(0.92);transform-origin:0 50%;text-decoration:underline;">Favourites</span>
<span class="t" style="left:706.55px;top:1024.15px;font-size:12.5px;line-height:16px;color:#fff;font-weight:bold;transform:scaleX(0.88);transform-origin:0 50%;">Code</span>
<span class="t" style="left:895.55px;top:1024.15px;font-size:12.5px;line-height:16px;color:#fff;font-weight:bold;transform:scaleX(0.97);transform-origin:0 50%;">Default Name</span>
<div style="left:1076px;top:1022.5px;width:49px;height:19.5px;overflow:hidden;"><span class="t" style="left:-8.300px;top:2px;font-size:12.500px;line-height:16px;font-weight:bold;color:#fff;letter-spacing:-.18px;">Default unit</span></div>
<div style="left:1126px;top:1022.5px;width:14.5px;height:19.5px;overflow:hidden;"><span class="t" style="left:-21.500px;top:2px;font-size:12.500px;line-height:16px;font-weight:bold;color:#fff;text-decoration:underline;letter-spacing:0px;">Constant</span></div>
<div style="left:558.5px;top:1042.2px;width:582px;height:20px;background:#dff3f3;"></div>
<div style="left:539px;top:1042.2px;width:19.5px;height:20px;background:#f0f0f0;border-right:1px solid #9a9a9a;border-bottom:1px solid #9a9a9a;"></div>
<div style="left:597px;top:1045px;width:13px;height:13px;background:#fff;border:1px solid #8e8f8f;"></div>
<div style="left:600px;top:1048px;width:7px;height:7px;background:linear-gradient(135deg,#45a8e0,#0f6cb0);border:1px solid #0b5a98;"></div>
<span class="t" style="left:797.5px;top:1044.53px;font-size:11px;line-height:14px;color:#000;letter-spacing:0.29px;">surf</span>
<div style="left:558.5px;top:1061.6px;width:582px;height:20px;background:#fff;"></div>
<div style="left:539px;top:1061.6px;width:19.5px;height:20px;background:#f0f0f0;border-right:1px solid #9a9a9a;border-bottom:1px solid #9a9a9a;"></div>
<div style="left:558.5px;top:1081px;width:582px;height:1px;background:#ededed;"></div>
<div style="left:648px;top:1061.6px;width:1px;height:20px;background:#ededed;"></div>
<div style="left:794px;top:1061.6px;width:1px;height:20px;background:#ededed;"></div>
<div style="left:1075px;top:1061.6px;width:1px;height:20px;background:#ededed;"></div>
<div style="left:1125px;top:1061.6px;width:1px;height:20px;background:#ededed;"></div>
<div style="left:597px;top:1065px;width:13px;height:13px;background:#fff;border:1px solid #8e8f8f;box-shadow:inset 0 0 0 1px #f4f4f4, inset 1.500px 1.500px 0 1px #dcdde6;"></div>
<svg style="left:599.6px;top:1067.2px;" width="8.4" height="9" viewBox="0 0 8.400 9"><path fill="none" stroke="#2d3f86" stroke-width="1.800" d="M.8 4.400L3.300 7.600 7.700 .6"/></svg>
<span class="t" style="left:652px;top:1064.33px;font-size:11px;line-height:14px;color:#000;letter-spacing:0.1px;">WallExtInsNetSurf</span>
<span class="t" style="left:797.5px;top:1064.33px;font-size:11px;line-height:14px;color:#000;letter-spacing:0.15px;">Wall Exterior Insulation Net Surface</span>
<span class="t" style="left:1079px;top:1064.33px;font-size:11px;line-height:14px;color:#000;letter-spacing:0.59px;">ft2</span>
<div style="left:558.5px;top:1081.6px;width:582px;height:20px;background:#fff;"></div>
<div style="left:539px;top:1081.6px;width:19.5px;height:20px;background:#f0f0f0;border-right:1px solid #9a9a9a;border-bottom:1px solid #9a9a9a;"></div>
<div style="left:558.5px;top:1101px;width:582px;height:1px;background:#ededed;"></div>
<div style="left:648px;top:1081.6px;width:1px;height:20px;background:#ededed;"></div>
<div style="left:794px;top:1081.6px;width:1px;height:20px;background:#ededed;"></div>
<div style="left:1075px;top:1081.6px;width:1px;height:20px;background:#ededed;"></div>
<div style="left:1125px;top:1081.6px;width:1px;height:20px;background:#ededed;"></div>
<div style="left:597px;top:1085px;width:13px;height:13px;background:#fff;border:1px solid #8e8f8f;box-shadow:inset 0 0 0 1px #f4f4f4, inset 1.500px 1.500px 0 1px #dcdde6;"></div>
<svg style="left:599.6px;top:1087.2px;" width="8.4" height="9" viewBox="0 0 8.400 9"><path fill="none" stroke="#2d3f86" stroke-width="1.800" d="M.8 4.400L3.300 7.600 7.700 .6"/></svg>
<span class="t" style="left:652px;top:1084.33px;font-size:11px;line-height:14px;color:#000;transform:scaleX(0.99);transform-origin:0 50%;">WallExtFinNetSurf</span>
<span class="t" style="left:797.5px;top:1084.33px;font-size:11px;line-height:14px;color:#000;letter-spacing:0.06px;">Wall Exterior Finish Net Surface</span>
<span class="t" style="left:1079px;top:1084.33px;font-size:11px;line-height:14px;color:#000;letter-spacing:0.59px;">ft2</span>
<div style="left:558.5px;top:1101.6px;width:582px;height:20px;background:#fff;"></div>
<div style="left:539px;top:1101.6px;width:19.5px;height:20px;background:#f0f0f0;border-right:1px solid #9a9a9a;border-bottom:1px solid #9a9a9a;"></div>
<div style="left:558.5px;top:1121px;width:582px;height:1px;background:#ededed;"></div>
<div style="left:648px;top:1101.6px;width:1px;height:20px;background:#ededed;"></div>
<div style="left:794px;top:1101.6px;width:1px;height:20px;background:#ededed;"></div>
<div style="left:1075px;top:1101.6px;width:1px;height:20px;background:#ededed;"></div>
<div style="left:1125px;top:1101.6px;width:1px;height:20px;background:#ededed;"></div>
<div style="left:597px;top:1105px;width:13px;height:13px;background:#fff;border:1px solid #8e8f8f;box-shadow:inset 0 0 0 1px #f4f4f4, inset 1.500px 1.500px 0 1px #dcdde6;"></div>
<svg style="left:599.6px;top:1107.2px;" width="8.4" height="9" viewBox="0 0 8.400 9"><path fill="none" stroke="#2d3f86" stroke-width="1.800" d="M.8 4.400L3.300 7.600 7.700 .6"/></svg>
<span class="t" style="left:652px;top:1104.33px;font-size:11px;line-height:14px;color:#000;letter-spacing:0.13px;">WallIntFinNetSurf</span>
<span class="t" style="left:797.5px;top:1104.33px;font-size:11px;line-height:14px;color:#000;letter-spacing:0.15px;">Wall Interior Finish Net Surface</span>
<span class="t" style="left:1079px;top:1104.33px;font-size:11px;line-height:14px;color:#000;letter-spacing:0.59px;">ft2</span>
<div style="left:558.5px;top:1121.6px;width:582px;height:20px;background:#fff;"></div>
<div style="left:539px;top:1121.6px;width:19.5px;height:20px;background:#f0f0f0;border-right:1px solid #9a9a9a;border-bottom:1px solid #9a9a9a;"></div>
<div style="left:558.5px;top:1141px;width:582px;height:1px;background:#ededed;"></div>
<div style="left:648px;top:1121.6px;width:1px;height:20px;background:#ededed;"></div>
<div style="left:794px;top:1121.6px;width:1px;height:20px;background:#ededed;"></div>
<div style="left:1075px;top:1121.6px;width:1px;height:20px;background:#ededed;"></div>
<div style="left:1125px;top:1121.6px;width:1px;height:20px;background:#ededed;"></div>
<div style="left:597px;top:1125px;width:13px;height:13px;background:#fff;border:1px solid #8e8f8f;box-shadow:inset 0 0 0 1px #f4f4f4, inset 1.500px 1.500px 0 1px #dcdde6;"></div>
<svg style="left:599.6px;top:1127.2px;" width="8.4" height="9" viewBox="0 0 8.400 9"><path fill="none" stroke="#2d3f86" stroke-width="1.800" d="M.8 4.400L3.300 7.600 7.700 .6"/></svg>
<span class="t" style="left:652px;top:1124.33px;font-size:11px;line-height:14px;color:#000;transform:scaleX(0.99);transform-origin:0 50%;">WallConcGrssSurf</span>
<span class="t" style="left:797.5px;top:1124.33px;font-size:11px;line-height:14px;color:#000;letter-spacing:0.05px;">Wall Concrete Gross Surface</span>
<span class="t" style="left:1079px;top:1124.33px;font-size:11px;line-height:14px;color:#000;letter-spacing:0.59px;">ft2</span>
<div style="left:558.5px;top:1141.6px;width:582px;height:20px;background:#fff;"></div>
<div style="left:539px;top:1141.6px;width:19.5px;height:20px;background:#f0f0f0;border-right:1px solid #9a9a9a;border-bottom:1px solid #9a9a9a;"></div>
<div style="left:558.5px;top:1161px;width:582px;height:1px;background:#ededed;"></div>
<div style="left:648px;top:1141.6px;width:1px;height:20px;background:#ededed;"></div>
<div style="left:794px;top:1141.6px;width:1px;height:20px;background:#ededed;"></div>
<div style="left:1075px;top:1141.6px;width:1px;height:20px;background:#ededed;"></div>
<div style="left:1125px;top:1141.6px;width:1px;height:20px;background:#ededed;"></div>
<div style="left:597px;top:1145px;width:13px;height:13px;background:#fff;border:1px solid #8e8f8f;box-shadow:inset 0 0 0 1px #f4f4f4, inset 1.500px 1.500px 0 1px #dcdde6;"></div>
<svg style="left:599.6px;top:1147.2px;" width="8.4" height="9" viewBox="0 0 8.400 9"><path fill="none" stroke="#2d3f86" stroke-width="1.800" d="M.8 4.400L3.300 7.600 7.700 .6"/></svg>
<span class="t" style="left:652px;top:1144.33px;font-size:11px;line-height:14px;color:#000;transform:scaleX(0.99);transform-origin:0 50%;">WallExtFinGrssSurf</span>
<span class="t" style="left:797.5px;top:1144.33px;font-size:11px;line-height:14px;color:#000;letter-spacing:0.05px;">Wall Exterior Finish Gross Surface</span>
<span class="t" style="left:1079px;top:1144.33px;font-size:11px;line-height:14px;color:#000;letter-spacing:0.59px;">ft2</span>
<div style="left:558.5px;top:1161.6px;width:582px;height:20px;background:#fff;"></div>
<div style="left:539px;top:1161.6px;width:19.5px;height:20px;background:#f0f0f0;border-right:1px solid #9a9a9a;border-bottom:1px solid #9a9a9a;"></div>
<div style="left:558.5px;top:1181px;width:582px;height:1px;background:#ededed;"></div>
<div style="left:648px;top:1161.6px;width:1px;height:20px;background:#ededed;"></div>
<div style="left:794px;top:1161.6px;width:1px;height:20px;background:#ededed;"></div>
<div style="left:1075px;top:1161.6px;width:1px;height:20px;background:#ededed;"></div>
<div style="left:1125px;top:1161.6px;width:1px;height:20px;background:#ededed;"></div>
<div style="left:597px;top:1165px;width:13px;height:13px;background:#fff;border:1px solid #8e8f8f;box-shadow:inset 0 0 0 1px #f4f4f4, inset 1.500px 1.500px 0 1px #dcdde6;"></div>
<svg style="left:599.6px;top:1167.2px;" width="8.4" height="9" viewBox="0 0 8.400 9"><path fill="none" stroke="#2d3f86" stroke-width="1.800" d="M.8 4.400L3.300 7.600 7.700 .6"/></svg>
<span class="t" style="left:652px;top:1164.33px;font-size:11px;line-height:14px;color:#000;letter-spacing:0.01px;">WallFrmNetSurf</span>
<span class="t" style="left:797.5px;top:1164.33px;font-size:11px;line-height:14px;color:#000;letter-spacing:0.04px;">Wall Framing Net Surface</span>
<span class="t" style="left:1079px;top:1164.33px;font-size:11px;line-height:14px;color:#000;letter-spacing:0.59px;">ft2</span>
<div style="left:558.5px;top:1181.6px;width:582px;height:20px;background:#fff;"></div>
<div style="left:539px;top:1181.6px;width:19.5px;height:20px;background:#f0f0f0;border-right:1px solid #9a9a9a;border-bottom:1px solid #9a9a9a;"></div>
<div style="left:558.5px;top:1201px;width:582px;height:1px;background:#ededed;"></div>
<div style="left:648px;top:1181.6px;width:1px;height:20px;background:#ededed;"></div>
<div style="left:794px;top:1181.6px;width:1px;height:20px;background:#ededed;"></div>
<div style="left:1075px;top:1181.6px;width:1px;height:20px;background:#ededed;"></div>
<div style="left:1125px;top:1181.6px;width:1px;height:20px;background:#ededed;"></div>
<div style="left:597px;top:1185px;width:13px;height:13px;background:#fff;border:1px solid #8e8f8f;box-shadow:inset 0 0 0 1px #f4f4f4, inset 1.500px 1.500px 0 1px #dcdde6;"></div>
<svg style="left:599.6px;top:1187.2px;" width="8.4" height="9" viewBox="0 0 8.400 9"><path fill="none" stroke="#2d3f86" stroke-width="1.800" d="M.8 4.400L3.300 7.600 7.700 .6"/></svg>
<span class="t" style="left:652px;top:1184.33px;font-size:11px;line-height:14px;color:#000;letter-spacing:0.02px;">OpenGrssSurf</span>
<span class="t" style="left:797.5px;top:1184.33px;font-size:11px;line-height:14px;color:#000;transform:scaleX(1);transform-origin:0 50%;">Gross Surface Openings</span>
<span class="t" style="left:1079px;top:1184.33px;font-size:11px;line-height:14px;color:#000;letter-spacing:0.59px;">ft2</span>
<div style="left:558.5px;top:1201.6px;width:582px;height:20px;background:#fff;"></div>
<div style="left:539px;top:1201.6px;width:19.5px;height:20px;background:#f0f0f0;border-right:1px solid #9a9a9a;border-bottom:1px solid #9a9a9a;"></div>
<div style="left:558.5px;top:1221px;width:582px;height:1px;background:#ededed;"></div>
<div style="left:648px;top:1201.6px;width:1px;height:20px;background:#ededed;"></div>
<div style="left:794px;top:1201.6px;width:1px;height:20px;background:#ededed;"></div>
<div style="left:1075px;top:1201.6px;width:1px;height:20px;background:#ededed;"></div>
<div style="left:1125px;top:1201.6px;width:1px;height:20px;background:#ededed;"></div>
<div style="left:597px;top:1205px;width:13px;height:13px;background:#fff;border:1px solid #8e8f8f;box-shadow:inset 0 0 0 1px #f4f4f4, inset 1.500px 1.500px 0 1px #dcdde6;"></div>
<svg style="left:599.6px;top:1207.2px;" width="8.4" height="9" viewBox="0 0 8.400 9"><path fill="none" stroke="#2d3f86" stroke-width="1.800" d="M.8 4.400L3.300 7.600 7.700 .6"/></svg>
<span class="t" style="left:652px;top:1204.33px;font-size:11px;line-height:14px;color:#000;transform:scaleX(1);transform-origin:0 50%;">WallOpenGrssSurf</span>
<span class="t" style="left:797.5px;top:1204.33px;font-size:11px;line-height:14px;color:#000;letter-spacing:0.09px;">Wall Openings gross surface</span>
<span class="t" style="left:1079px;top:1204.33px;font-size:11px;line-height:14px;color:#000;letter-spacing:0.59px;">ft2</span>
<div style="left:558.5px;top:1221.6px;width:582px;height:20px;background:#fff;"></div>
<div style="left:539px;top:1221.6px;width:19.5px;height:20px;background:#f0f0f0;border-right:1px solid #9a9a9a;border-bottom:1px solid #9a9a9a;"></div>
<div style="left:558.5px;top:1241px;width:582px;height:1px;background:#ededed;"></div>
<div style="left:648px;top:1221.6px;width:1px;height:20px;background:#ededed;"></div>
<div style="left:794px;top:1221.6px;width:1px;height:20px;background:#ededed;"></div>
<div style="left:1075px;top:1221.6px;width:1px;height:20px;background:#ededed;"></div>
<div style="left:1125px;top:1221.6px;width:1px;height:20px;background:#ededed;"></div>
<div style="left:597px;top:1225px;width:13px;height:13px;background:#fff;border:1px solid #8e8f8f;box-shadow:inset 0 0 0 1px #f4f4f4, inset 1.500px 1.500px 0 1px #dcdde6;"></div>
<svg style="left:599.6px;top:1227.2px;" width="8.4" height="9" viewBox="0 0 8.400 9"><path fill="none" stroke="#2d3f86" stroke-width="1.800" d="M.8 4.400L3.300 7.600 7.700 .6"/></svg>
<span class="t" style="left:652px;top:1224.33px;font-size:11px;line-height:14px;color:#000;letter-spacing:0.03px;">FlrGrssSurf</span>
<span class="t" style="left:797.5px;top:1224.33px;font-size:11px;line-height:14px;color:#000;letter-spacing:0px;">Floor Gross Surface</span>
<span class="t" style="left:1079px;top:1224.33px;font-size:11px;line-height:14px;color:#000;letter-spacing:0.59px;">ft2</span>
<div style="left:558.5px;top:1241.6px;width:582px;height:20px;background:#fff;"></div>
<div style="left:539px;top:1241.6px;width:19.5px;height:20px;background:#f0f0f0;border-right:1px solid #9a9a9a;border-bottom:1px solid #9a9a9a;"></div>
<div style="left:558.5px;top:1261px;width:582px;height:1px;background:#ededed;"></div>
<div style="left:648px;top:1241.6px;width:1px;height:20px;background:#ededed;"></div>
<div style="left:794px;top:1241.6px;width:1px;height:20px;background:#ededed;"></div>
<div style="left:1075px;top:1241.6px;width:1px;height:20px;background:#ededed;"></div>
<div style="left:1125px;top:1241.6px;width:1px;height:20px;background:#ededed;"></div>
<div style="left:597px;top:1245px;width:13px;height:13px;background:#fff;border:1px solid #8e8f8f;box-shadow:inset 0 0 0 1px #f4f4f4, inset 1.500px 1.500px 0 1px #dcdde6;"></div>
<svg style="left:599.6px;top:1247.2px;" width="8.4" height="9" viewBox="0 0 8.400 9"><path fill="none" stroke="#2d3f86" stroke-width="1.800" d="M.8 4.400L3.300 7.600 7.700 .6"/></svg>
<span class="t" style="left:652px;top:1244.33px;font-size:11px;line-height:14px;color:#000;letter-spacing:0.04px;">FlrNetSurf</span>
<span class="t" style="left:797.5px;top:1244.33px;font-size:11px;line-height:14px;color:#000;letter-spacing:0.08px;">Floor Net Surface</span>
<span class="t" style="left:1079px;top:1244.33px;font-size:11px;line-height:14px;color:#000;letter-spacing:0.59px;">ft2</span>
<div style="left:558.5px;top:1261.6px;width:582px;height:20px;background:#0078d7;"></div>
<div style="left:539px;top:1261.6px;width:19.5px;height:20px;background:#f0f0f0;border-right:1px solid #9a9a9a;border-bottom:1px solid #9a9a9a;"></div>
<div style="left:558.5px;top:1281px;width:582px;height:1px;background:#0078d7;"></div>
<div style="left:648px;top:1261.6px;width:1px;height:20px;background:#ededed;"></div>
<div style="left:794px;top:1261.6px;width:1px;height:20px;background:#ededed;"></div>
<div style="left:1075px;top:1261.6px;width:1px;height:20px;background:#ededed;"></div>
<div style="left:1125px;top:1261.6px;width:1px;height:20px;background:#ededed;"></div>
<div style="left:597px;top:1265px;width:13px;height:13px;background:#fff;border:1px solid #8e8f8f;box-shadow:inset 0 0 0 1px #f4f4f4, inset 1.500px 1.500px 0 1px #dcdde6;"></div>
<svg style="left:599.6px;top:1267.2px;" width="8.4" height="9" viewBox="0 0 8.400 9"><path fill="none" stroke="#2d3f86" stroke-width="1.800" d="M.8 4.400L3.300 7.600 7.700 .6"/></svg>
<span class="t" style="left:652px;top:1264.33px;font-size:11px;line-height:14px;color:#fff;transform:scaleX(0.99);transform-origin:0 50%;">Surf-s</span>
<span class="t" style="left:797.5px;top:1264.33px;font-size:11px;line-height:14px;color:#fff;transform:scaleX(0.98);transform-origin:0 50%;">Surface</span>
<span class="t" style="left:1079px;top:1264.33px;font-size:11px;line-height:14px;color:#fff;letter-spacing:0.59px;">ft2</span>
<div style="left:539px;top:1281.6px;width:601.5px;height:5.4px;overflow:hidden;"><div style="left:0;top:0;width:19.500px;height:20px;background:#f0f0f0;border-right:1px solid #9a9a9a;"></div><div style="left:58px;top:3.500px;width:12.500px;height:12.500px;border:1px solid #8e8f8f;"></div><span class="t" style="left:113px;top:2.500px;font-size:11px;line-height:15px;letter-spacing:.4px;">WallIntFinGrssSurf</span><span class="t" style="left:258.500px;top:2.500px;font-size:11px;line-height:15px;letter-spacing:.4px;">Wall Interior Finish Gross Surface</span><span class="t" style="left:539px;top:2.500px;font-size:11px;line-height:15px;letter-spacing:.4px;">ft2</span></div>
<div style="left:1140.5px;top:1022px;width:17px;height:265px;background:#f0f0f0;"></div>
<div style="left:1141.5px;top:1039.5px;width:15.5px;height:19px;background:#cdcdcd;"></div>
<svg style="left:1145px;top:1028px;" width="8.5" height="5.5" viewBox="0 0 8.500 5.500"><path fill="none" stroke="#505050" stroke-width="2" d="M.6 4.700L4.250 1l3.650 3.700"/></svg>
<svg style="left:1145px;top:1275.5px;" width="8.5" height="5.5" viewBox="0 0 8.500 5.500"><path fill="none" stroke="#505050" stroke-width="2" d="M.6 .8L4.250 4.500 7.900 .8"/></svg>
<div style="left:539px;top:1287px;width:618.5px;height:16.6px;background:#f0f0f0;"></div>
<div style="left:555.7px;top:1287.8px;width:463px;height:15.4px;background:#cdcdcd;"></div>
<svg style="left:544.5px;top:1291px;" width="5.5" height="8.5" viewBox="0 0 5.500 8.500"><path fill="none" stroke="#505050" stroke-width="2" d="M4.700 .6L1 4.250l3.700 3.650"/></svg>
<svg style="left:1129.5px;top:1291px;" width="5.5" height="8.5" viewBox="0 0 5.500 8.500"><path fill="none" stroke="#505050" stroke-width="2" d="M.8 .6L4.500 4.250.8 7.900"/></svg>
<svg style="left:1188px;top:1033.3px;" width="1" height="1" viewBox="0 0 1 1"><path fill="none" stroke="#6a6a6a" stroke-width="3.3" stroke-linecap="round" stroke-linejoin="round" d="M-11.25 0H10.45M2.65 -8.6L11.25 0L2.65 8.6"/></svg>
<svg style="left:1188px;top:1073.5px;" width="1" height="1" viewBox="0 0 1 1"><path fill="none" stroke="#6a6a6a" stroke-width="3.3" stroke-linecap="round" stroke-linejoin="round" d="M11.25 0H-10.45M-2.65 -8.6L-11.25 0L-2.65 8.6"/></svg>
<div style="left:1211px;top:944px;width:3px;height:381.5px;background:#3a6db5;"></div>
<div style="left:1194.7px;top:1040.4px;width:29.2px;height:29.2px;background:#8c0b0b;border-radius:50%;"></div>
<span class="t" style="left:1204.16px;top:1044.52px;font-size:18.5px;line-height:22px;color:#fff;">2</span>
<div style="left:2078px;top:944px;width:3px;height:381.5px;background:#3a6db5;"></div>
<div style="left:1223px;top:953px;width:835.3px;height:356.3px;border:1px solid #bcbcbc;"></div>
<div style="left:1228.5px;top:946px;width:68.5px;height:14px;background:#fff;"></div>
<span class="t" style="left:1231px;top:947.33px;font-size:11px;line-height:14px;color:#1f1f2e;letter-spacing:0.01px;">Item settings</span>
<div style="left:1233px;top:969px;width:814.5px;height:33.6px;background:#fff;border-top:2px solid #6d6d6d;border-left:2px solid #6d6d6d;border-right:1px solid #e3e3e3;border-bottom:1px solid #e3e3e3;"></div>
<svg style="left:1245px;top:975.8px;" width="19.6" height="19.6" viewBox="0 0 26 26"><path fill="#0b2130" d="M10.7 0.5h4.6a.8.8 0 0 1 .8.8V9.9H25a.8.8 0 0 1 .8.8v4.6a.8.8 0 0 1-.8.8H16.1V25a.8.8 0 0 1-.8.8h-4.6a.8.8 0 0 1-.8-.8V16.1H1a.8.8 0 0 1-.8-.8v-4.6A.8.8 0 0 1 1 9.9H9.9V1.3a.8.8 0 0 1 .8-.8z"/></svg>
<svg style="left:1281.2px;top:976px;" width="19.4" height="19.4" viewBox="0 0 19 19.400"><path fill="none" stroke="#7a7a7a" stroke-width="1.300" d="M6.300 2.400V1.300a.7.7 0 0 1 .7-.7h5a.7.7 0 0 1 .7.700v1.100"/><rect x="0" y="2.200" width="19" height="2.400" rx=".5" fill="#7a7a7a"/><path fill="#7a7a7a" d="M1.300 5.800h16.400v12.600a1 1 0 0 1-1 1H2.300a1 1 0 0 1-1-1z"/><path stroke="#fff" stroke-width="1.300" d="M4.900 7.800v9M8 7.800v9M11 7.800v9M14.100 7.800v9"/></svg>
<svg style="left:1320.4px;top:976px;" width="13.6" height="18.5" viewBox="0 0 20 28" preserveAspectRatio="none"><rect x="0" y="0" width="20" height="1.95" fill="#111"/><path fill="none" stroke="#111" stroke-width="2.3" d="M10 28V6M1.600 14.600L10 6.200l8.400 8.400"/></svg>
<svg style="left:1352.5px;top:977.8px;" width="13.4" height="17.5" viewBox="0 4.54 20 23.46" preserveAspectRatio="none"><path fill="none" stroke="#111" stroke-width="2.3" d="M10 28V6M1.600 14.600L10 6.200l8.400 8.400"/></svg>
<svg style="left:1384.2px;top:977.8px;" width="13.4" height="17.5" viewBox="0 5 20 23.46" preserveAspectRatio="none"><path fill="none" stroke="#111" stroke-width="2.3" d="M10 5V27M1.600 18.400L10 26.800l8.400-8.400"/></svg>
<svg style="left:1416.6px;top:977.5px;" width="13.4" height="17.8" viewBox="0 0 20 28" preserveAspectRatio="none"><rect x="0" y="26.05" width="20" height="1.95" fill="#111"/><path fill="none" stroke="#111" stroke-width="2.3" d="M10 0V22M1.600 13.400L10 21.800l8.400-8.400"/></svg>
<svg style="left:1449px;top:976px;" width="20" height="19.4" viewBox="0 0 20 20" preserveAspectRatio="none"><path fill="#050d18" d="M.6 3.600L8 12v6.800a1 1 0 0 0 1 1h2a1 1 0 0 0 1-1V12l7.400-8.400z"/><ellipse cx="10" cy="3.500" rx="9" ry="2.900" fill="#fff" stroke="#050d18" stroke-width="1.800"/><path stroke="#fff" stroke-width="1.300" d="M8.300 7.200l3.400 3.400M11.700 7.200l-3.400 3.400"/></svg>
<svg style="left:1481px;top:982.5px;" width="20" height="8.2" viewBox="0 0 20 8.6"><rect x="6.200" y="0" width="13.800" height="2.800" rx=".6" fill="#050d18"/><rect x="0" y="5.600" width="14.400" height="2.800" rx=".6" fill="#050d18"/></svg>
<svg style="left:1515px;top:979.2px;" width="16" height="13" viewBox="0 0 16 13"><path fill="none" stroke="#0b2130" stroke-width="1.3" d="M.8 0v11.900H16"/><path stroke="#0b2130" stroke-width="1.4" d="M3.800 10.600V6.800M6.800 10.600V3.600M9.800 10.600V6.200M12.800 10.600V.8"/></svg>
<svg style="left:1548.5px;top:978px;" width="17" height="16" viewBox="0 0 17 16"><text x="0" y="12" font-family="Liberation Serif,serif" font-style="italic" font-size="15" fill="#777">f</text><text x="5.500" y="12" font-family="Liberation Serif,serif" font-style="italic" font-size="14" fill="#777">x</text></svg>
<svg style="left:1578px;top:980.3px;" width="20" height="12.8" viewBox="0 0 20 12.800"><rect x="0" y="0" width="20" height="4.600" rx=".7" fill="#050d18"/><rect x="0" y="8.200" width="20" height="4.600" rx=".7" fill="#050d18"/></svg>
<svg style="left:1610px;top:978px;" width="20" height="17" viewBox="0 0 20 17"><path fill="#fff" stroke="#0b2130" stroke-width="1.300" stroke-linejoin="round" d="M3.700 13.500V1.700a1 1 0 0 1 1-1h6.900l4.600 4.600v8.200"/><path fill="none" stroke="#0b2130" stroke-width="1" d="M11.600 .7v4.600h4.600"/><rect x="0" y="13.500" width="20" height="3.300" fill="#0b2130"/><path stroke="#fff" stroke-width=".8" d="M3 13.500v1.500M6 13.500v1.500M9 13.500v1.500M12 13.500v1.500M15 13.500v1.500M18 13.500v1.500"/></svg>
<svg style="left:1644.3px;top:978.5px;" width="15.6" height="15.6" viewBox="0 0 16 16"><path fill="#fff" stroke="#0b2130" stroke-width="1.700" stroke-linejoin="round" d="M.9 .9h12l2.200 2.200v12H.9z"/><rect x="3.400" y=".9" width="8.400" height="5" fill="#0b2130"/><rect x="8" y="1.500" width="2" height="3.200" fill="#fff"/></svg>
<svg style="left:1674px;top:980.5px;" width="20" height="12.2" viewBox="7.1 5.9 31.7 20" preserveAspectRatio="none"><path fill="none" stroke="#f5820d" stroke-width="4.1" stroke-linejoin="miter" d="M14 11.5L10 16.1l6.4 6.9 4.2-4.5M15.1 7.4l14.4 15.6 6.4-6.9-6.4-7.1-4.2 4.4"/></svg>
<svg style="left:1708.4px;top:977px;" width="15.8" height="18.4" viewBox="0 0 26 29"><path fill="none" stroke="#4a4a4a" stroke-width="2" d="M1.2 24.5V3.4a2.2 2.2 0 0 1 2.2-2.2h11.5"/><path fill="#fff" stroke="#4a4a4a" stroke-width="2" stroke-linejoin="round" d="M7 5.6h10.2l7.6 7.6v13.6a1.2 1.2 0 0 1-1.2 1.2H7a1.2 1.2 0 0 1-1.2-1.2V6.8A1.2 1.2 0 0 1 7 5.6z"/><path fill="none" stroke="#4a4a4a" stroke-width="1.6" d="M17.2 5.6v7.6h7.6"/></svg>
<svg style="left:1741px;top:978px;" width="14.6" height="16.2" viewBox="0 0 21 27"><rect x=".9" y="3.6" width="15.2" height="17.6" rx=".8" fill="#fff" stroke="#555" stroke-width="1.9"/><path fill="none" stroke="#555" stroke-width="1.5" d="M6.2 3.4V2.6a2.3 2.3 0 0 1 4.6 0v.8"/><rect x="3.6" y="2.8" width="9.8" height="2.6" fill="#555"/><path fill="#fff" stroke="#555" stroke-width="1.9" stroke-linejoin="round" d="M11.2 8.8h8.9v17.3H8V12z"/><path fill="none" stroke="#555" stroke-width="1.2" d="M11.2 8.8V12H8"/></svg>
<svg style="left:1771.4px;top:976px;" width="17.2" height="18.4" viewBox="0 0 18 19"><path fill="#666" d="M12.600 4.300L16.400 .4l1.400 1.400-3.900 3.900z"/><path fill="#666" d="M7.400 4.600l6.200 6.200-1.900 1.900-6.200-6.200z"/><path fill="#999" stroke="#666" stroke-width=".9" d="M4.800 7.200l6.200 6.200-3.400 5.200L.600 11.400z"/></svg>
<svg style="left:1802.5px;top:977px;" width="18" height="17.6" viewBox="0 0 18 18"><path fill="none" stroke="#1f3550" stroke-width="1.700" d="M2.600 8.200A6.600 6.600 0 0 1 13.800 4.600"/><path fill="#1f3550" d="M16.800 1v6.400h-6.400z"/><text x="0" y="14.600" font-family="Liberation Serif,serif" font-size="10.500" fill="#222">a</text><text x="9.600" y="17.800" font-family="Liberation Serif,serif" font-size="10" fill="#222">b</text></svg>
<div style="left:1233px;top:1004px;width:814px;height:300.5px;background:#ababab;border:1px solid #6d6d6d;"></div>
<div style="left:1234px;top:1004.2px;width:811.5px;height:20.6px;background:#212935;"></div>
<div style="left:1253px;top:1004.7px;width:1px;height:19.8px;background:#dfe1e4;"></div>
<div style="left:1427px;top:1004.7px;width:1px;height:19.8px;background:#dfe1e4;"></div>
<div style="left:1687px;top:1004.7px;width:1px;height:19.8px;background:#dfe1e4;"></div>
<div style="left:1737px;top:1004.7px;width:1px;height:19.8px;background:#dfe1e4;"></div>
<div style="left:1838px;top:1004.7px;width:1px;height:19.8px;background:#dfe1e4;"></div>
<div style="left:1888px;top:1004.7px;width:1px;height:19.8px;background:#dfe1e4;"></div>
<div style="left:1938px;top:1004.7px;width:1px;height:19.8px;background:#dfe1e4;"></div>
<span class="t" style="left:1326.25px;top:1006.75px;font-size:12.5px;line-height:16px;color:#fff;font-weight:bold;transform:scaleX(0.88);transform-origin:0 50%;">Code</span>
<span class="t" style="left:1491.65px;top:1006.75px;font-size:12.5px;line-height:16px;color:#fff;font-weight:bold;transform:scaleX(0.96);transform-origin:0 50%;">Param. name / Options</span>
<span class="t" style="left:1692.55px;top:1006.75px;font-size:12.5px;line-height:16px;color:#fff;font-weight:bold;transform:scaleX(0.93);transform-origin:0 50%;">Option</span>
<span class="t" style="left:1772px;top:1006.75px;font-size:12.5px;line-height:16px;color:#fff;font-weight:bold;letter-spacing:0.07px;text-decoration:underline;">Value</span>
<span class="t" style="left:1851.85px;top:1006.75px;font-size:12.5px;line-height:16px;color:#fff;font-weight:bold;transform:scaleX(0.92);transform-origin:0 50%;">Unit</span>
<div style="left:1888.5px;top:1004.7px;width:49px;height:19.8px;overflow:hidden;"><span class="t" style="left:.8px;top:2px;font-size:12.500px;line-height:16px;font-weight:bold;color:#fff;text-decoration:underline;letter-spacing:-.3px;">Constant</span></div>
<span class="t" style="left:1969.5px;top:1006.75px;font-size:12.5px;line-height:16px;color:#fff;font-weight:bold;transform:scaleX(0.99);transform-origin:0 50%;">TakeOff</span>
<div style="left:1253px;top:1024.8px;width:792.5px;height:20.4px;background:#dff3f3;"></div>
<div style="left:1234px;top:1024.8px;width:19px;height:20.4px;background:#f0f0f0;border-right:1px solid #9a9a9a;border-bottom:1px solid #9a9a9a;"></div>
<div style="left:1907px;top:1028px;width:13px;height:13px;background:#fff;border:1px solid #8e8f8f;"></div>
<div style="left:1910px;top:1031px;width:7px;height:7px;background:linear-gradient(135deg,#45a8e0,#0f6cb0);border:1px solid #0b5a98;"></div>
<div style="left:1253px;top:1047px;width:792.5px;height:15px;background:#fff;"></div>
<div style="left:1234px;top:1047px;width:19px;height:15px;background:#f0f0f0;border-right:1px solid #9a9a9a;border-bottom:1px solid #9a9a9a;"></div>
<div style="left:1737.5px;top:1047px;width:100.5px;height:15px;background:#fff8e1;"></div>
<span class="t" style="left:1257px;top:1048.13px;font-size:11px;line-height:14px;color:#000;transform:scaleX(0.92);transform-origin:0 50%;">UE</span>
<span class="t" style="left:1430.5px;top:1048.13px;font-size:11px;line-height:14px;color:#000;letter-spacing:0.14px;">Total Surface</span>
<div style="left:1687px;top:1047px;width:50.5px;height:15px;overflow:hidden;"><span class="t" style="left:4px;top:0.6px;font-size:11px;line-height:15px;letter-spacing:.62px;">Validation</span></div>
<span class="t" style="left:1811.5px;top:1048.34px;font-size:11.5px;line-height:15px;color:#000;font-weight:bold;letter-spacing:0.28px;">0.00</span>
<span class="t" style="left:1842px;top:1048.13px;font-size:11px;line-height:14px;color:#000;letter-spacing:0.59px;">ft2</span>
<div style="left:1907px;top:1048px;width:13px;height:13px;background:#fff;border:1px solid #8e8f8f;box-shadow:inset 0 0 0 1px #f4f4f4, inset 1.500px 1.500px 0 1px #dcdde6;"></div>
<div style="left:1253px;top:1064.4px;width:792.5px;height:20px;background:#fff;"></div>
<div style="left:1234px;top:1064.4px;width:19px;height:20px;background:#f0f0f0;border-right:1px solid #9a9a9a;border-bottom:1px solid #9a9a9a;"></div>
<div style="left:1253px;top:1083px;width:792.5px;height:1px;background:#ededed;"></div>
<div style="left:1427px;top:1064.4px;width:1px;height:20px;background:#ededed;"></div>
<div style="left:1687px;top:1064.4px;width:1px;height:20px;background:#ededed;"></div>
<div style="left:1737px;top:1064.4px;width:1px;height:20px;background:#ededed;"></div>
<div style="left:1838px;top:1064.4px;width:1px;height:20px;background:#ededed;"></div>
<div style="left:1888px;top:1064.4px;width:1px;height:20px;background:#ededed;"></div>
<div style="left:1938px;top:1064.4px;width:1px;height:20px;background:#ededed;"></div>
<div style="left:1737.5px;top:1064.4px;width:100.5px;height:20px;background:#fff87c;"></div>
<span class="t" style="left:1257px;top:1067.73px;font-size:11px;line-height:14px;color:#000;letter-spacing:0.22px;">No</span>
<span class="t" style="left:1430.5px;top:1067.73px;font-size:11px;line-height:14px;color:#000;letter-spacing:0.15px;">Number</span>
<span class="t" style="left:1691px;top:1067.73px;font-size:11px;line-height:14px;color:#000;transform:scaleX(0.98);transform-origin:0 50%;">Special</span>
<span class="t" style="left:1811.5px;top:1067.94px;font-size:11.5px;line-height:15px;color:#000;font-weight:bold;letter-spacing:0.28px;">0.00</span>
<span class="t" style="left:1842px;top:1067.73px;font-size:11px;line-height:14px;color:#000;letter-spacing:0.19px;">unit</span>
<div style="left:1907px;top:1068px;width:13px;height:13px;background:#fff;border:1px solid #8e8f8f;box-shadow:inset 0 0 0 1px #f4f4f4, inset 1.500px 1.500px 0 1px #dcdde6;"></div>
<div style="left:1253px;top:1084.4px;width:792.5px;height:20px;background:#fff;"></div>
<div style="left:1234px;top:1084.4px;width:19px;height:20px;background:#f0f0f0;border-right:1px solid #9a9a9a;border-bottom:1px solid #9a9a9a;"></div>
<div style="left:1253px;top:1103px;width:792.5px;height:1px;background:#ededed;"></div>
<div style="left:1427px;top:1084.4px;width:1px;height:20px;background:#ededed;"></div>
<div style="left:1687px;top:1084.4px;width:1px;height:20px;background:#ededed;"></div>
<div style="left:1737px;top:1084.4px;width:1px;height:20px;background:#ededed;"></div>
<div style="left:1838px;top:1084.4px;width:1px;height:20px;background:#ededed;"></div>
<div style="left:1888px;top:1084.4px;width:1px;height:20px;background:#ededed;"></div>
<div style="left:1938px;top:1084.4px;width:1px;height:20px;background:#ededed;"></div>
<span class="t" style="left:1257px;top:1087.73px;font-size:11px;line-height:14px;color:#000;transform:scaleX(0.89);transform-origin:0 50%;">TE</span>
<span class="t" style="left:1430.5px;top:1087.73px;font-size:11px;line-height:14px;color:#000;letter-spacing:0.14px;">Total Surface</span>
<span class="t" style="left:1691px;top:1087.73px;font-size:11px;line-height:14px;color:#000;letter-spacing:0.11px;">Non</span>
<span class="t" style="left:1813.5px;top:1087.73px;font-size:11px;line-height:14px;color:#000;letter-spacing:0.02px;text-decoration:underline;">0.00</span>
<span class="t" style="left:1842px;top:1087.73px;font-size:11px;line-height:14px;color:#000;letter-spacing:0.59px;">ft2</span>
<div style="left:1907px;top:1088px;width:13px;height:13px;background:#fff;border:1px solid #8e8f8f;box-shadow:inset 0 0 0 1px #f4f4f4, inset 1.500px 1.500px 0 1px #dcdde6;"></div>
<div style="left:1253px;top:1104.4px;width:792.5px;height:20px;background:#fff;"></div>
<div style="left:1234px;top:1104.4px;width:19px;height:20px;background:#f0f0f0;border-right:1px solid #9a9a9a;border-bottom:1px solid #9a9a9a;"></div>
<div style="left:1253px;top:1123px;width:792.5px;height:1px;background:#ededed;"></div>
<div style="left:1427px;top:1104.4px;width:1px;height:20px;background:#ededed;"></div>
<div style="left:1687px;top:1104.4px;width:1px;height:20px;background:#ededed;"></div>
<div style="left:1737px;top:1104.4px;width:1px;height:20px;background:#ededed;"></div>
<div style="left:1838px;top:1104.4px;width:1px;height:20px;background:#ededed;"></div>
<div style="left:1888px;top:1104.4px;width:1px;height:20px;background:#ededed;"></div>
<div style="left:1938px;top:1104.4px;width:1px;height:20px;background:#ededed;"></div>
<span class="t" style="left:1257px;top:1107.73px;font-size:11px;line-height:14px;color:#000;transform:scaleX(0.88);transform-origin:0 50%;">C</span>
<span class="t" style="left:1430.5px;top:1107.73px;font-size:11px;line-height:14px;color:#000;transform:scaleX(0.99);transform-origin:0 50%;">Surface per Package</span>
<span class="t" style="left:1691px;top:1107.73px;font-size:11px;line-height:14px;color:#000;letter-spacing:0.11px;">Non</span>
<span class="t" style="left:1787.5px;top:1107.94px;font-size:11.5px;line-height:15px;color:#000;font-weight:bold;letter-spacing:0.34px;">1,000.00</span>
<span class="t" style="left:1842px;top:1107.73px;font-size:11px;line-height:14px;color:#000;letter-spacing:0.59px;">ft2</span>
<div style="left:1907px;top:1108px;width:13px;height:13px;background:#fff;border:1px solid #8e8f8f;box-shadow:inset 0 0 0 1px #f4f4f4, inset 1.500px 1.500px 0 1px #dcdde6;"></div>
<svg style="left:1909.6px;top:1110.2px;" width="8.4" height="9" viewBox="0 0 8.400 9"><path fill="none" stroke="#2d3f86" stroke-width="1.800" d="M.8 4.400L3.300 7.600 7.700 .6"/></svg>
<div style="left:1253px;top:1124.4px;width:792.5px;height:20px;background:#fff;"></div>
<div style="left:1234px;top:1124.4px;width:19px;height:20px;background:#f0f0f0;border-right:1px solid #9a9a9a;border-bottom:1px solid #9a9a9a;"></div>
<div style="left:1253px;top:1143px;width:792.5px;height:1px;background:#ededed;"></div>
<div style="left:1427px;top:1124.4px;width:1px;height:20px;background:#ededed;"></div>
<div style="left:1687px;top:1124.4px;width:1px;height:20px;background:#ededed;"></div>
<div style="left:1737px;top:1124.4px;width:1px;height:20px;background:#ededed;"></div>
<div style="left:1838px;top:1124.4px;width:1px;height:20px;background:#ededed;"></div>
<div style="left:1888px;top:1124.4px;width:1px;height:20px;background:#ededed;"></div>
<div style="left:1938px;top:1124.4px;width:1px;height:20px;background:#ededed;"></div>
<span class="t" style="left:1257px;top:1127.73px;font-size:11px;line-height:14px;color:#000;transform:scaleX(0.88);transform-origin:0 50%;">Q</span>
<span class="t" style="left:1430.5px;top:1127.73px;font-size:11px;line-height:14px;color:#000;letter-spacing:0.19px;">Quantity</span>
<span class="t" style="left:1691px;top:1127.73px;font-size:11px;line-height:14px;color:#000;letter-spacing:0.11px;">Non</span>
<span class="t" style="left:1813.5px;top:1127.73px;font-size:11px;line-height:14px;color:#000;letter-spacing:0.02px;text-decoration:underline;">0.00</span>
<span class="t" style="left:1842px;top:1127.73px;font-size:11px;line-height:14px;color:#000;letter-spacing:0.18px;">Box</span>
<div style="left:1907px;top:1128px;width:13px;height:13px;background:#fff;border:1px solid #8e8f8f;box-shadow:inset 0 0 0 1px #f4f4f4, inset 1.500px 1.500px 0 1px #dcdde6;"></div>
<div style="left:1253px;top:1144.4px;width:792.5px;height:20px;background:#fff;"></div>
<div style="left:1234px;top:1144.4px;width:19px;height:20px;background:#f0f0f0;border-right:1px solid #9a9a9a;border-bottom:1px solid #9a9a9a;"></div>
<div style="left:1253px;top:1163px;width:792.5px;height:1px;background:#ededed;"></div>
<div style="left:1427px;top:1144.4px;width:1px;height:20px;background:#ededed;"></div>
<div style="left:1687px;top:1144.4px;width:1px;height:20px;background:#ededed;"></div>
<div style="left:1737px;top:1144.4px;width:1px;height:20px;background:#ededed;"></div>
<div style="left:1838px;top:1144.4px;width:1px;height:20px;background:#ededed;"></div>
<div style="left:1888px;top:1144.4px;width:1px;height:20px;background:#ededed;"></div>
<div style="left:1938px;top:1144.4px;width:1px;height:20px;background:#ededed;"></div>
<div style="left:1737.5px;top:1144.4px;width:100.5px;height:20px;background:#fff87c;"></div>
<span class="t" style="left:1257px;top:1147.73px;font-size:11px;line-height:14px;color:#000;transform:scaleX(0.89);transform-origin:0 50%;">RF</span>
<span class="t" style="left:1430.5px;top:1147.73px;font-size:11px;line-height:14px;color:#000;letter-spacing:0.21px;">Rounding-off Factor</span>
<span class="t" style="left:1691px;top:1147.73px;font-size:11px;line-height:14px;color:#000;transform:scaleX(0.98);transform-origin:0 50%;">Special</span>
<span class="t" style="left:1811.5px;top:1147.94px;font-size:11.5px;line-height:15px;color:#000;font-weight:bold;letter-spacing:0.28px;">1.00</span>
<span class="t" style="left:1842px;top:1147.73px;font-size:11px;line-height:14px;color:#000;letter-spacing:0.18px;">Box</span>
<div style="left:1907px;top:1148px;width:13px;height:13px;background:#fff;border:1px solid #8e8f8f;box-shadow:inset 0 0 0 1px #f4f4f4, inset 1.500px 1.500px 0 1px #dcdde6;"></div>
<div style="left:1253px;top:1164.4px;width:792.5px;height:19.4px;background:#fff;"></div>
<div style="left:1234px;top:1164.4px;width:19px;height:19.4px;background:#f0f0f0;border-right:1px solid #9a9a9a;border-bottom:1px solid #9a9a9a;"></div>
<div style="left:1253px;top:1183px;width:792.5px;height:1px;background:#ededed;"></div>
<div style="left:1427px;top:1164.4px;width:1px;height:19.4px;background:#ededed;"></div>
<div style="left:1687px;top:1164.4px;width:1px;height:19.4px;background:#ededed;"></div>
<div style="left:1737px;top:1164.4px;width:1px;height:19.4px;background:#ededed;"></div>
<div style="left:1838px;top:1164.4px;width:1px;height:19.4px;background:#ededed;"></div>
<div style="left:1888px;top:1164.4px;width:1px;height:19.4px;background:#ededed;"></div>
<div style="left:1938px;top:1164.4px;width:1px;height:19.4px;background:#ededed;"></div>
<span class="t" style="left:1257px;top:1167.73px;font-size:11px;line-height:14px;color:#000;transform:scaleX(0.88);transform-origin:0 50%;">FQ</span>
<span class="t" style="left:1430.5px;top:1167.73px;font-size:11px;line-height:14px;color:#000;letter-spacing:0.12px;">Final Quantity</span>
<span class="t" style="left:1691px;top:1167.73px;font-size:11px;line-height:14px;color:#000;letter-spacing:0.11px;">Non</span>
<span class="t" style="left:1813.5px;top:1167.73px;font-size:11px;line-height:14px;color:#000;letter-spacing:0.02px;text-decoration:underline;">0.00</span>
<span class="t" style="left:1842px;top:1167.73px;font-size:11px;line-height:14px;color:#000;letter-spacing:0.18px;">Box</span>
<div style="left:1907px;top:1168px;width:13px;height:13px;background:#fff;border:1px solid #8e8f8f;box-shadow:inset 0 0 0 1px #f4f4f4, inset 1.500px 1.500px 0 1px #dcdde6;"></div>
<div style="left:1253px;top:1045px;width:792.5px;height:2px;background:#000;"></div>
<div style="left:1253px;top:1062px;width:792.5px;height:2.4px;background:#000;"></div>
<div style="left:1234px;top:1184px;width:811.5px;height:1px;background:#8f8f8f;"></div>
<div style="left:2086.8px;top:949.5px;width:56px;height:22.4px;background:#000;"></div>
<span class="t" style="left:2093px;top:952.94px;font-size:11.5px;line-height:15px;color:#fff;letter-spacing:0.05px;">Formula</span>
<span class="t" style="left:2150.5px;top:952.94px;font-size:11.5px;line-height:15px;color:#111;letter-spacing:0.04px;">Description</span>
<div style="left:2214px;top:951px;width:1px;height:19px;background:#222;"></div>
<span class="t" style="left:2222.5px;top:952.94px;font-size:11.5px;line-height:15px;color:#111;letter-spacing:0.23px;">Takeoff</span>
<div style="left:2268px;top:951px;width:1px;height:19px;background:#222;"></div>
<div style="left:2552px;top:971px;width:1px;height:351px;background:#000;"></div>
<div style="left:2080px;top:1321px;width:472.5px;height:1px;background:#000;"></div>
<div style="left:2087.4px;top:991.4px;width:456.6px;height:325.3px;border:1px solid #b5b5b5;"></div>
<span class="t" style="left:2147.3px;top:1010.33px;font-size:11px;line-height:14px;color:#1f1f2e;letter-spacing:0.24px;">Setting :</span>
<div style="left:2217.4px;top:1009.4px;width:314px;height:18.6px;background:#cbd7ef;border-left:1px solid #8e9ab8;border-top:1px solid #8e9ab8;"></div>
<span class="t" style="left:2220.5px;top:1012.33px;font-size:11px;line-height:14px;color:#1a1a2a;letter-spacing:0.14px;">Total Surface</span>
<span class="t" style="left:2147.3px;top:1034.43px;font-size:11px;line-height:14px;color:#1f1f2e;letter-spacing:0.21px;">Of item :</span>
<div style="left:2217.4px;top:1033.6px;width:314px;height:18.4px;background:#cbd7ef;border-left:1px solid #8e9ab8;border-top:1px solid #8e9ab8;"></div>
<span class="t" style="left:2220.5px;top:1036.43px;font-size:11px;line-height:14px;color:#1a1a2a;letter-spacing:0.08px;">12&quot; Canexel RidgeWood D-5 Siding Plank (20)</span>
<div style="left:2148.2px;top:1064.6px;width:357.8px;height:52.2px;border:1px solid #bcbcbc;"></div>
<div style="left:2155px;top:1057.6px;width:32px;height:14px;background:#fff;"></div>
<span class="t" style="left:2157.5px;top:1058.93px;font-size:11px;line-height:14px;color:#1f1f2e;transform:scaleX(0.95);transform-origin:0 50%;">Value</span>
<div style="left:2163.8px;top:1074.9px;width:11.6px;height:11.6px;background:#fff;border-radius:50%;border:1px solid #7a7a7a;border-right-color:#e8e8e8;border-bottom-color:#e8e8e8;transform:rotate(0deg);"></div>
<div style="left:2167.6px;top:1078.7px;width:4px;height:4px;background:#000;border-radius:50%;"></div>
<span class="t" style="left:2181.3px;top:1074.33px;font-size:11px;line-height:14px;color:#1f1f2e;transform:scaleX(0.98);transform-origin:0 50%;">Manual</span>
<div style="left:2243.2px;top:1070.4px;width:132px;height:18.3px;background:#f0f0f0;border:1px solid #a8a8a8;"></div>
<span class="t" style="left:2245px;top:1072.63px;font-size:11px;line-height:14px;color:#111;">0</span>
<div style="left:2388.2px;top:1070.4px;width:88px;height:18.3px;background:#fff;border:1px solid #a8a8a8;"></div>
<span class="t" style="left:2390.5px;top:1072.63px;font-size:11px;line-height:14px;color:#111;letter-spacing:0.59px;">ft2</span>
<div style="left:2476.2px;top:1069.5px;width:20.2px;height:19.2px;background:#f0f0f0;border-right:1.500px solid #696969;border-bottom:1.500px solid #696969;border-top:1px solid #fff;border-left:1px solid #e3e3e3;"></div>
<span class="t" style="left:2481px;top:1072.94px;font-size:12px;line-height:16px;color:#111;">...</span>
<div style="left:2163.8px;top:1097px;width:11.6px;height:11.6px;background:#fff;border-radius:50%;border:1px solid #7a7a7a;border-right-color:#e8e8e8;border-bottom-color:#e8e8e8;transform:rotate(0deg);"></div>
<span class="t" style="left:2181.3px;top:1096.43px;font-size:11px;line-height:14px;color:#1f1f2e;letter-spacing:0.02px;">Formula</span>
<div style="left:2243.2px;top:1092.6px;width:132px;height:18.3px;background:#fff;border:1px solid #a8a8a8;"></div>
<div style="left:2388.2px;top:1092.6px;width:88px;height:18.3px;background:#fff;border:1px solid #a8a8a8;"></div>
<div style="left:2476.2px;top:1091.7px;width:20.2px;height:19.2px;background:#f0f0f0;border-right:1.500px solid #696969;border-bottom:1.500px solid #696969;border-top:1px solid #fff;border-left:1px solid #e3e3e3;"></div>
<span class="t" style="left:2481px;top:1095.14px;font-size:12px;line-height:16px;color:#8a8a8a;">...</span>
<svg style="left:2113px;top:1105.3px;" width="1" height="1" viewBox="0 0 1 1"><path fill="none" stroke="#0b1a26" stroke-width="2.1" stroke-linecap="round" stroke-linejoin="round" d="M-8 0H7.2M2.24 -5.76L8 0L2.24 5.76"/></svg>
<div style="left:2146px;top:1122px;width:384.3px;height:30.6px;background:#fff;border-top:2px solid #6d6d6d;border-left:2px solid #6d6d6d;border-right:1px solid #e3e3e3;border-bottom:1px solid #e3e3e3;"></div>
<svg style="left:2153.5px;top:1129px;" width="20" height="19.4" viewBox="0 0 20 20"><path fill="#555" d="M13.200 2.500l4.300 4.300L6.300 18 .6 19.400 2 13.700z"/><path fill="#555" d="M14.300 1.400l1-1a1.500 1.500 0 0 1 2.100 0l2.200 2.200a1.500 1.500 0 0 1 0 2.100l-1 1z"/><path fill="#fff" d="M2.900 14.300l2.800 2.800-3.400 .9z" opacity=".0"/></svg>
<svg style="left:2187.5px;top:1131.5px;" width="15.8" height="15.8" viewBox="0 0 16 16"><path fill="#fff" stroke="#0b2130" stroke-width="1.700" stroke-linejoin="round" d="M.9 .9h12l2.200 2.200v12H.9z"/><rect x="3.400" y=".9" width="8.400" height="5" fill="#0b2130"/><rect x="8" y="1.500" width="2" height="3.200" fill="#fff"/></svg>
<svg style="left:2218.6px;top:1129.5px;" width="17.6" height="19.6" viewBox="0 0 28 32"><path fill="#fff" stroke="#555" stroke-width="1.5" stroke-linejoin="round" d="M2.8 1.1H19l7.9 7.9v20.3a1.6 1.6 0 0 1-1.6 1.6H2.8a1.6 1.6 0 0 1-1.6-1.6V2.7a1.6 1.6 0 0 1 1.6-1.6z"/><path fill="none" stroke="#555" stroke-width="1.125" d="M19 1.1V9h7.9"/><text x="13.6" y="27.6" text-anchor="middle" font-family="Liberation Sans,sans-serif" font-weight="bold" font-size="29" fill="#555">x</text></svg>
<svg style="left:2251px;top:1130.5px;" width="16.2" height="18" viewBox="0 0 26 29"><path fill="none" stroke="#9a9a9a" stroke-width="1.8" d="M1.2 24.5V3.4a2.2 2.2 0 0 1 2.2-2.2h11.5"/><path fill="#fff" stroke="#9a9a9a" stroke-width="1.8" stroke-linejoin="round" d="M7 5.6h10.2l7.6 7.6v13.6a1.2 1.2 0 0 1-1.2 1.2H7a1.2 1.2 0 0 1-1.2-1.2V6.8A1.2 1.2 0 0 1 7 5.6z"/><path fill="none" stroke="#9a9a9a" stroke-width="1.4400000000000002" d="M17.2 5.6v7.6h7.6"/></svg>
<svg style="left:2283.5px;top:1131.5px;" width="15.2" height="16" viewBox="0 0 21 27"><rect x=".9" y="3.6" width="15.2" height="17.6" rx=".8" fill="#fff" stroke="#9a9a9a" stroke-width="1.8"/><path fill="none" stroke="#9a9a9a" stroke-width="1.5" d="M6.2 3.4V2.6a2.3 2.3 0 0 1 4.6 0v.8"/><rect x="3.6" y="2.8" width="9.8" height="2.6" fill="#9a9a9a"/><path fill="#fff" stroke="#9a9a9a" stroke-width="1.8" stroke-linejoin="round" d="M11.2 8.8h8.9v17.3H8V12z"/><path fill="none" stroke="#9a9a9a" stroke-width="1.2" d="M11.2 8.8V12H8"/></svg>
<svg style="left:2316.5px;top:1132.5px;" width="15" height="14" viewBox="0 0 16 17" preserveAspectRatio="none"><path fill="#0b1a26" d="M7 0v4c5.800 0 9.600 3 8.800 12.600-1.400-5.400-3.800-7-8.800-7v4.200L0 6.800z"/></svg>
<svg style="left:2351.5px;top:1130px;" width="17.5" height="17" viewBox="0 0 17 16"><text x="0" y="12" font-family="Liberation Serif,serif" font-style="italic" font-size="15" fill="#555">f</text><text x="5.500" y="12" font-family="Liberation Serif,serif" font-style="italic" font-size="14" fill="#555">x</text></svg>
<span class="t" style="left:2379.39px;top:1128.19px;font-size:15.5px;line-height:18px;color:#333;font-family:'Liberation Serif',serif;">“T”</span>
<svg style="left:2413px;top:1137.6px;" width="20" height="3.6" viewBox="0 0 20 3.600"><rect x="0" y="0" width="20" height="3.600" fill="#0b2130"/><path stroke="#fff" stroke-width=".8" d="M3 1.600v2M6 1.600v2M9 1.600v2M12 1.600v2M15 1.600v2M18 1.600v2"/></svg>
<svg style="left:2445px;top:1131px;" width="20" height="17" viewBox="0 0 20 17"><path fill="#fff" stroke="#0b2130" stroke-width="1.300" stroke-linejoin="round" d="M3.700 13.500V1.700a1 1 0 0 1 1-1h6.900l4.600 4.600v8.200"/><path fill="none" stroke="#0b2130" stroke-width="1" d="M11.600 .7v4.600h4.600"/><rect x="0" y="13.500" width="20" height="3.300" fill="#0b2130"/><path stroke="#fff" stroke-width=".8" d="M3 13.500v1.500M6 13.500v1.500M9 13.500v1.500M12 13.500v1.500M15 13.500v1.500M18 13.500v1.500"/></svg>
<div style="left:2146px;top:1156px;width:384.3px;height:137.6px;background:#cbd7ef;border-top:2px solid #6d6d6d;border-left:2px solid #6d6d6d;"></div>
<div style="left:2119.8px;top:1125px;width:29.2px;height:29.2px;background:#8c0b0b;border-radius:50%;"></div>
<span class="t" style="left:2129.26px;top:1129.12px;font-size:18.5px;line-height:22px;color:#fff;">3</span>
<div style="left:638px;top:1328px;width:57px;height:22.5px;background:#fff;border-right:1px solid #000;border-bottom:1px solid #000;"></div>
<span class="t" style="left:529px;top:1332.93px;font-size:11px;line-height:14px;color:#444;letter-spacing:0.38px;">Descriptions /Notes</span>
<span class="t" style="left:646px;top:1332.93px;font-size:11px;line-height:14px;color:#444;letter-spacing:0.16px;">Settings</span>
<span class="t" style="left:703px;top:1332.93px;font-size:11px;line-height:14px;color:#444;letter-spacing:0.08px;">Cost price</span>
<span class="t" style="left:768.7px;top:1332.93px;font-size:11px;line-height:14px;color:#444;letter-spacing:0.23px;">Error / Improvements</span>
<span class="t" style="left:893.7px;top:1332.93px;font-size:11px;line-height:14px;color:#444;transform:scaleX(0.96);transform-origin:0 50%;">Summary</span>
<span class="t" style="left:957.5px;top:1332.93px;font-size:11px;line-height:14px;color:#444;letter-spacing:0.14px;">Usage</span>
<div style="left:760px;top:1330.5px;width:1px;height:18.5px;background:#222;"></div>
<div style="left:885px;top:1330.5px;width:1px;height:18.5px;background:#222;"></div>
<div style="left:949px;top:1330.5px;width:1px;height:18.5px;background:#222;"></div>
<div style="left:996px;top:1330.5px;width:1px;height:18.5px;background:#222;"></div>
<div style="left:5px;top:1354px;width:2560px;height:3.5px;background:#f0f0f0;"></div>
<div style="left:7px;top:1356px;width:199px;height:1px;background:#a8a8a8;"></div>
<div style="left:209.5px;top:1356px;width:171.5px;height:1px;background:#a8a8a8;"></div>
<div style="left:384.5px;top:1356px;width:2161.5px;height:1px;background:#a8a8a8;"></div>
</body></html>
